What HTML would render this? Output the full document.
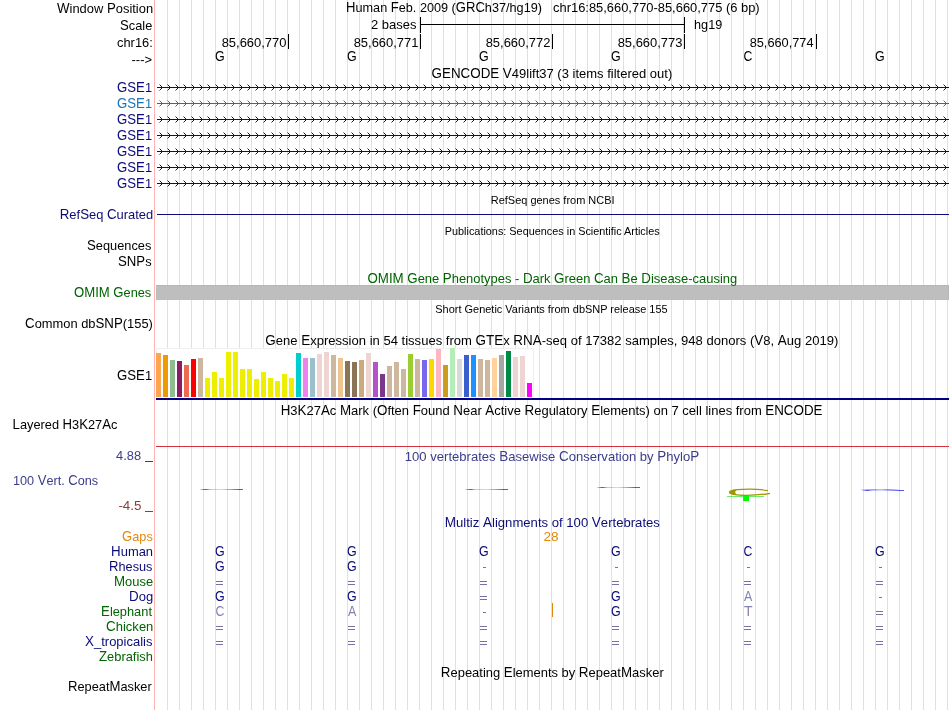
<!DOCTYPE html>
<html><head><meta charset="utf-8"><style>
html,body{margin:0;padding:0;background:#fff;width:950px;height:710px;overflow:hidden}
svg{display:block;font-family:"Liberation Sans",sans-serif;will-change:transform}
</style></head><body>
<svg width="950" height="710" viewBox="0 0 950 710">
<g shape-rendering="crispEdges">
<rect x="0" y="0" width="950" height="710" fill="#fff"/>
<path d="M167.5 0V710M179.5 0V710M191.5 0V710M203.5 0V710M215.5 0V710M227.5 0V710M239.5 0V710M251.5 0V710M263.5 0V710M275.5 0V710M287.5 0V710M299.5 0V710M311.5 0V710M323.5 0V710M335.5 0V710M347.5 0V710M359.5 0V710M371.5 0V710M383.5 0V710M395.5 0V710M407.5 0V710M419.5 0V710M431.5 0V710M443.5 0V710M455.5 0V710M467.5 0V710M479.5 0V710M491.5 0V710M503.5 0V710M515.5 0V710M527.5 0V710M539.5 0V710M551.5 0V710M563.5 0V710M575.5 0V710M587.5 0V710M599.5 0V710M611.5 0V710M623.5 0V710M635.5 0V710M647.5 0V710M659.5 0V710M671.5 0V710M683.5 0V710M695.5 0V710M707.5 0V710M719.5 0V710M731.5 0V710M743.5 0V710M755.5 0V710M767.5 0V710M779.5 0V710M791.5 0V710M803.5 0V710M815.5 0V710M827.5 0V710M839.5 0V710M851.5 0V710M863.5 0V710M875.5 0V710M887.5 0V710M899.5 0V710M911.5 0V710M923.5 0V710M935.5 0V710M947.5 0V710" stroke="#dcdcff" stroke-width="1" fill="none"/>
<path d="M154.5 0V710" stroke="#ffb4b4" stroke-width="1"/>
<path d="M420 17h1v16h-1zM420 24h265v1h-265zM684 17h1v16h-1z" fill="#000"/>
<path d="M288 34h1v15h-1z" fill="#000"/><path d="M420 34h1v15h-1z" fill="#000"/><path d="M552 34h1v15h-1z" fill="#000"/><path d="M684 34h1v15h-1z" fill="#000"/><path d="M816 34h1v15h-1z" fill="#000"/>
<path d="M157 87h792v1h-792zM161 86h1v3h-1zM160 85h1v1h-1zM160 89h1v1h-1zM169 86h1v3h-1zM168 85h1v1h-1zM168 89h1v1h-1zM177 86h1v3h-1zM176 85h1v1h-1zM176 89h1v1h-1zM185 86h1v3h-1zM184 85h1v1h-1zM184 89h1v1h-1zM193 86h1v3h-1zM192 85h1v1h-1zM192 89h1v1h-1zM201 86h1v3h-1zM200 85h1v1h-1zM200 89h1v1h-1zM209 86h1v3h-1zM208 85h1v1h-1zM208 89h1v1h-1zM217 86h1v3h-1zM216 85h1v1h-1zM216 89h1v1h-1zM225 86h1v3h-1zM224 85h1v1h-1zM224 89h1v1h-1zM233 86h1v3h-1zM232 85h1v1h-1zM232 89h1v1h-1zM241 86h1v3h-1zM240 85h1v1h-1zM240 89h1v1h-1zM249 86h1v3h-1zM248 85h1v1h-1zM248 89h1v1h-1zM257 86h1v3h-1zM256 85h1v1h-1zM256 89h1v1h-1zM265 86h1v3h-1zM264 85h1v1h-1zM264 89h1v1h-1zM273 86h1v3h-1zM272 85h1v1h-1zM272 89h1v1h-1zM281 86h1v3h-1zM280 85h1v1h-1zM280 89h1v1h-1zM289 86h1v3h-1zM288 85h1v1h-1zM288 89h1v1h-1zM297 86h1v3h-1zM296 85h1v1h-1zM296 89h1v1h-1zM305 86h1v3h-1zM304 85h1v1h-1zM304 89h1v1h-1zM313 86h1v3h-1zM312 85h1v1h-1zM312 89h1v1h-1zM321 86h1v3h-1zM320 85h1v1h-1zM320 89h1v1h-1zM329 86h1v3h-1zM328 85h1v1h-1zM328 89h1v1h-1zM337 86h1v3h-1zM336 85h1v1h-1zM336 89h1v1h-1zM345 86h1v3h-1zM344 85h1v1h-1zM344 89h1v1h-1zM353 86h1v3h-1zM352 85h1v1h-1zM352 89h1v1h-1zM361 86h1v3h-1zM360 85h1v1h-1zM360 89h1v1h-1zM369 86h1v3h-1zM368 85h1v1h-1zM368 89h1v1h-1zM377 86h1v3h-1zM376 85h1v1h-1zM376 89h1v1h-1zM385 86h1v3h-1zM384 85h1v1h-1zM384 89h1v1h-1zM393 86h1v3h-1zM392 85h1v1h-1zM392 89h1v1h-1zM401 86h1v3h-1zM400 85h1v1h-1zM400 89h1v1h-1zM409 86h1v3h-1zM408 85h1v1h-1zM408 89h1v1h-1zM417 86h1v3h-1zM416 85h1v1h-1zM416 89h1v1h-1zM425 86h1v3h-1zM424 85h1v1h-1zM424 89h1v1h-1zM433 86h1v3h-1zM432 85h1v1h-1zM432 89h1v1h-1zM441 86h1v3h-1zM440 85h1v1h-1zM440 89h1v1h-1zM449 86h1v3h-1zM448 85h1v1h-1zM448 89h1v1h-1zM457 86h1v3h-1zM456 85h1v1h-1zM456 89h1v1h-1zM465 86h1v3h-1zM464 85h1v1h-1zM464 89h1v1h-1zM473 86h1v3h-1zM472 85h1v1h-1zM472 89h1v1h-1zM481 86h1v3h-1zM480 85h1v1h-1zM480 89h1v1h-1zM489 86h1v3h-1zM488 85h1v1h-1zM488 89h1v1h-1zM497 86h1v3h-1zM496 85h1v1h-1zM496 89h1v1h-1zM505 86h1v3h-1zM504 85h1v1h-1zM504 89h1v1h-1zM513 86h1v3h-1zM512 85h1v1h-1zM512 89h1v1h-1zM521 86h1v3h-1zM520 85h1v1h-1zM520 89h1v1h-1zM529 86h1v3h-1zM528 85h1v1h-1zM528 89h1v1h-1zM537 86h1v3h-1zM536 85h1v1h-1zM536 89h1v1h-1zM545 86h1v3h-1zM544 85h1v1h-1zM544 89h1v1h-1zM553 86h1v3h-1zM552 85h1v1h-1zM552 89h1v1h-1zM561 86h1v3h-1zM560 85h1v1h-1zM560 89h1v1h-1zM569 86h1v3h-1zM568 85h1v1h-1zM568 89h1v1h-1zM577 86h1v3h-1zM576 85h1v1h-1zM576 89h1v1h-1zM585 86h1v3h-1zM584 85h1v1h-1zM584 89h1v1h-1zM593 86h1v3h-1zM592 85h1v1h-1zM592 89h1v1h-1zM601 86h1v3h-1zM600 85h1v1h-1zM600 89h1v1h-1zM609 86h1v3h-1zM608 85h1v1h-1zM608 89h1v1h-1zM617 86h1v3h-1zM616 85h1v1h-1zM616 89h1v1h-1zM625 86h1v3h-1zM624 85h1v1h-1zM624 89h1v1h-1zM633 86h1v3h-1zM632 85h1v1h-1zM632 89h1v1h-1zM641 86h1v3h-1zM640 85h1v1h-1zM640 89h1v1h-1zM649 86h1v3h-1zM648 85h1v1h-1zM648 89h1v1h-1zM657 86h1v3h-1zM656 85h1v1h-1zM656 89h1v1h-1zM665 86h1v3h-1zM664 85h1v1h-1zM664 89h1v1h-1zM673 86h1v3h-1zM672 85h1v1h-1zM672 89h1v1h-1zM681 86h1v3h-1zM680 85h1v1h-1zM680 89h1v1h-1zM689 86h1v3h-1zM688 85h1v1h-1zM688 89h1v1h-1zM697 86h1v3h-1zM696 85h1v1h-1zM696 89h1v1h-1zM705 86h1v3h-1zM704 85h1v1h-1zM704 89h1v1h-1zM713 86h1v3h-1zM712 85h1v1h-1zM712 89h1v1h-1zM721 86h1v3h-1zM720 85h1v1h-1zM720 89h1v1h-1zM729 86h1v3h-1zM728 85h1v1h-1zM728 89h1v1h-1zM737 86h1v3h-1zM736 85h1v1h-1zM736 89h1v1h-1zM745 86h1v3h-1zM744 85h1v1h-1zM744 89h1v1h-1zM753 86h1v3h-1zM752 85h1v1h-1zM752 89h1v1h-1zM761 86h1v3h-1zM760 85h1v1h-1zM760 89h1v1h-1zM769 86h1v3h-1zM768 85h1v1h-1zM768 89h1v1h-1zM777 86h1v3h-1zM776 85h1v1h-1zM776 89h1v1h-1zM785 86h1v3h-1zM784 85h1v1h-1zM784 89h1v1h-1zM793 86h1v3h-1zM792 85h1v1h-1zM792 89h1v1h-1zM801 86h1v3h-1zM800 85h1v1h-1zM800 89h1v1h-1zM809 86h1v3h-1zM808 85h1v1h-1zM808 89h1v1h-1zM817 86h1v3h-1zM816 85h1v1h-1zM816 89h1v1h-1zM825 86h1v3h-1zM824 85h1v1h-1zM824 89h1v1h-1zM833 86h1v3h-1zM832 85h1v1h-1zM832 89h1v1h-1zM841 86h1v3h-1zM840 85h1v1h-1zM840 89h1v1h-1zM849 86h1v3h-1zM848 85h1v1h-1zM848 89h1v1h-1zM857 86h1v3h-1zM856 85h1v1h-1zM856 89h1v1h-1zM865 86h1v3h-1zM864 85h1v1h-1zM864 89h1v1h-1zM873 86h1v3h-1zM872 85h1v1h-1zM872 89h1v1h-1zM881 86h1v3h-1zM880 85h1v1h-1zM880 89h1v1h-1zM889 86h1v3h-1zM888 85h1v1h-1zM888 89h1v1h-1zM897 86h1v3h-1zM896 85h1v1h-1zM896 89h1v1h-1zM905 86h1v3h-1zM904 85h1v1h-1zM904 89h1v1h-1zM913 86h1v3h-1zM912 85h1v1h-1zM912 89h1v1h-1zM921 86h1v3h-1zM920 85h1v1h-1zM920 89h1v1h-1zM929 86h1v3h-1zM928 85h1v1h-1zM928 89h1v1h-1zM937 86h1v3h-1zM936 85h1v1h-1zM936 89h1v1h-1zM945 86h1v3h-1zM944 85h1v1h-1zM944 89h1v1h-1z" fill="#0c0c78"/>
<path d="M159 84h1v1h-1zM159 90h1v1h-1zM167 84h1v1h-1zM167 90h1v1h-1zM175 84h1v1h-1zM175 90h1v1h-1zM183 84h1v1h-1zM183 90h1v1h-1zM191 84h1v1h-1zM191 90h1v1h-1zM199 84h1v1h-1zM199 90h1v1h-1zM207 84h1v1h-1zM207 90h1v1h-1zM215 84h1v1h-1zM215 90h1v1h-1zM223 84h1v1h-1zM223 90h1v1h-1zM231 84h1v1h-1zM231 90h1v1h-1zM239 84h1v1h-1zM239 90h1v1h-1zM247 84h1v1h-1zM247 90h1v1h-1zM255 84h1v1h-1zM255 90h1v1h-1zM263 84h1v1h-1zM263 90h1v1h-1zM271 84h1v1h-1zM271 90h1v1h-1zM279 84h1v1h-1zM279 90h1v1h-1zM287 84h1v1h-1zM287 90h1v1h-1zM295 84h1v1h-1zM295 90h1v1h-1zM303 84h1v1h-1zM303 90h1v1h-1zM311 84h1v1h-1zM311 90h1v1h-1zM319 84h1v1h-1zM319 90h1v1h-1zM327 84h1v1h-1zM327 90h1v1h-1zM335 84h1v1h-1zM335 90h1v1h-1zM343 84h1v1h-1zM343 90h1v1h-1zM351 84h1v1h-1zM351 90h1v1h-1zM359 84h1v1h-1zM359 90h1v1h-1zM367 84h1v1h-1zM367 90h1v1h-1zM375 84h1v1h-1zM375 90h1v1h-1zM383 84h1v1h-1zM383 90h1v1h-1zM391 84h1v1h-1zM391 90h1v1h-1zM399 84h1v1h-1zM399 90h1v1h-1zM407 84h1v1h-1zM407 90h1v1h-1zM415 84h1v1h-1zM415 90h1v1h-1zM423 84h1v1h-1zM423 90h1v1h-1zM431 84h1v1h-1zM431 90h1v1h-1zM439 84h1v1h-1zM439 90h1v1h-1zM447 84h1v1h-1zM447 90h1v1h-1zM455 84h1v1h-1zM455 90h1v1h-1zM463 84h1v1h-1zM463 90h1v1h-1zM471 84h1v1h-1zM471 90h1v1h-1zM479 84h1v1h-1zM479 90h1v1h-1zM487 84h1v1h-1zM487 90h1v1h-1zM495 84h1v1h-1zM495 90h1v1h-1zM503 84h1v1h-1zM503 90h1v1h-1zM511 84h1v1h-1zM511 90h1v1h-1zM519 84h1v1h-1zM519 90h1v1h-1zM527 84h1v1h-1zM527 90h1v1h-1zM535 84h1v1h-1zM535 90h1v1h-1zM543 84h1v1h-1zM543 90h1v1h-1zM551 84h1v1h-1zM551 90h1v1h-1zM559 84h1v1h-1zM559 90h1v1h-1zM567 84h1v1h-1zM567 90h1v1h-1zM575 84h1v1h-1zM575 90h1v1h-1zM583 84h1v1h-1zM583 90h1v1h-1zM591 84h1v1h-1zM591 90h1v1h-1zM599 84h1v1h-1zM599 90h1v1h-1zM607 84h1v1h-1zM607 90h1v1h-1zM615 84h1v1h-1zM615 90h1v1h-1zM623 84h1v1h-1zM623 90h1v1h-1zM631 84h1v1h-1zM631 90h1v1h-1zM639 84h1v1h-1zM639 90h1v1h-1zM647 84h1v1h-1zM647 90h1v1h-1zM655 84h1v1h-1zM655 90h1v1h-1zM663 84h1v1h-1zM663 90h1v1h-1zM671 84h1v1h-1zM671 90h1v1h-1zM679 84h1v1h-1zM679 90h1v1h-1zM687 84h1v1h-1zM687 90h1v1h-1zM695 84h1v1h-1zM695 90h1v1h-1zM703 84h1v1h-1zM703 90h1v1h-1zM711 84h1v1h-1zM711 90h1v1h-1zM719 84h1v1h-1zM719 90h1v1h-1zM727 84h1v1h-1zM727 90h1v1h-1zM735 84h1v1h-1zM735 90h1v1h-1zM743 84h1v1h-1zM743 90h1v1h-1zM751 84h1v1h-1zM751 90h1v1h-1zM759 84h1v1h-1zM759 90h1v1h-1zM767 84h1v1h-1zM767 90h1v1h-1zM775 84h1v1h-1zM775 90h1v1h-1zM783 84h1v1h-1zM783 90h1v1h-1zM791 84h1v1h-1zM791 90h1v1h-1zM799 84h1v1h-1zM799 90h1v1h-1zM807 84h1v1h-1zM807 90h1v1h-1zM815 84h1v1h-1zM815 90h1v1h-1zM823 84h1v1h-1zM823 90h1v1h-1zM831 84h1v1h-1zM831 90h1v1h-1zM839 84h1v1h-1zM839 90h1v1h-1zM847 84h1v1h-1zM847 90h1v1h-1zM855 84h1v1h-1zM855 90h1v1h-1zM863 84h1v1h-1zM863 90h1v1h-1zM871 84h1v1h-1zM871 90h1v1h-1zM879 84h1v1h-1zM879 90h1v1h-1zM887 84h1v1h-1zM887 90h1v1h-1zM895 84h1v1h-1zM895 90h1v1h-1zM903 84h1v1h-1zM903 90h1v1h-1zM911 84h1v1h-1zM911 90h1v1h-1zM919 84h1v1h-1zM919 90h1v1h-1zM927 84h1v1h-1zM927 90h1v1h-1zM935 84h1v1h-1zM935 90h1v1h-1zM943 84h1v1h-1zM943 90h1v1h-1z" fill="#0c0c78" fill-opacity="0.45"/>
<path d="M157 103h792v1h-792zM161 102h1v3h-1zM160 101h1v1h-1zM160 105h1v1h-1zM169 102h1v3h-1zM168 101h1v1h-1zM168 105h1v1h-1zM177 102h1v3h-1zM176 101h1v1h-1zM176 105h1v1h-1zM185 102h1v3h-1zM184 101h1v1h-1zM184 105h1v1h-1zM193 102h1v3h-1zM192 101h1v1h-1zM192 105h1v1h-1zM201 102h1v3h-1zM200 101h1v1h-1zM200 105h1v1h-1zM209 102h1v3h-1zM208 101h1v1h-1zM208 105h1v1h-1zM217 102h1v3h-1zM216 101h1v1h-1zM216 105h1v1h-1zM225 102h1v3h-1zM224 101h1v1h-1zM224 105h1v1h-1zM233 102h1v3h-1zM232 101h1v1h-1zM232 105h1v1h-1zM241 102h1v3h-1zM240 101h1v1h-1zM240 105h1v1h-1zM249 102h1v3h-1zM248 101h1v1h-1zM248 105h1v1h-1zM257 102h1v3h-1zM256 101h1v1h-1zM256 105h1v1h-1zM265 102h1v3h-1zM264 101h1v1h-1zM264 105h1v1h-1zM273 102h1v3h-1zM272 101h1v1h-1zM272 105h1v1h-1zM281 102h1v3h-1zM280 101h1v1h-1zM280 105h1v1h-1zM289 102h1v3h-1zM288 101h1v1h-1zM288 105h1v1h-1zM297 102h1v3h-1zM296 101h1v1h-1zM296 105h1v1h-1zM305 102h1v3h-1zM304 101h1v1h-1zM304 105h1v1h-1zM313 102h1v3h-1zM312 101h1v1h-1zM312 105h1v1h-1zM321 102h1v3h-1zM320 101h1v1h-1zM320 105h1v1h-1zM329 102h1v3h-1zM328 101h1v1h-1zM328 105h1v1h-1zM337 102h1v3h-1zM336 101h1v1h-1zM336 105h1v1h-1zM345 102h1v3h-1zM344 101h1v1h-1zM344 105h1v1h-1zM353 102h1v3h-1zM352 101h1v1h-1zM352 105h1v1h-1zM361 102h1v3h-1zM360 101h1v1h-1zM360 105h1v1h-1zM369 102h1v3h-1zM368 101h1v1h-1zM368 105h1v1h-1zM377 102h1v3h-1zM376 101h1v1h-1zM376 105h1v1h-1zM385 102h1v3h-1zM384 101h1v1h-1zM384 105h1v1h-1zM393 102h1v3h-1zM392 101h1v1h-1zM392 105h1v1h-1zM401 102h1v3h-1zM400 101h1v1h-1zM400 105h1v1h-1zM409 102h1v3h-1zM408 101h1v1h-1zM408 105h1v1h-1zM417 102h1v3h-1zM416 101h1v1h-1zM416 105h1v1h-1zM425 102h1v3h-1zM424 101h1v1h-1zM424 105h1v1h-1zM433 102h1v3h-1zM432 101h1v1h-1zM432 105h1v1h-1zM441 102h1v3h-1zM440 101h1v1h-1zM440 105h1v1h-1zM449 102h1v3h-1zM448 101h1v1h-1zM448 105h1v1h-1zM457 102h1v3h-1zM456 101h1v1h-1zM456 105h1v1h-1zM465 102h1v3h-1zM464 101h1v1h-1zM464 105h1v1h-1zM473 102h1v3h-1zM472 101h1v1h-1zM472 105h1v1h-1zM481 102h1v3h-1zM480 101h1v1h-1zM480 105h1v1h-1zM489 102h1v3h-1zM488 101h1v1h-1zM488 105h1v1h-1zM497 102h1v3h-1zM496 101h1v1h-1zM496 105h1v1h-1zM505 102h1v3h-1zM504 101h1v1h-1zM504 105h1v1h-1zM513 102h1v3h-1zM512 101h1v1h-1zM512 105h1v1h-1zM521 102h1v3h-1zM520 101h1v1h-1zM520 105h1v1h-1zM529 102h1v3h-1zM528 101h1v1h-1zM528 105h1v1h-1zM537 102h1v3h-1zM536 101h1v1h-1zM536 105h1v1h-1zM545 102h1v3h-1zM544 101h1v1h-1zM544 105h1v1h-1zM553 102h1v3h-1zM552 101h1v1h-1zM552 105h1v1h-1zM561 102h1v3h-1zM560 101h1v1h-1zM560 105h1v1h-1zM569 102h1v3h-1zM568 101h1v1h-1zM568 105h1v1h-1zM577 102h1v3h-1zM576 101h1v1h-1zM576 105h1v1h-1zM585 102h1v3h-1zM584 101h1v1h-1zM584 105h1v1h-1zM593 102h1v3h-1zM592 101h1v1h-1zM592 105h1v1h-1zM601 102h1v3h-1zM600 101h1v1h-1zM600 105h1v1h-1zM609 102h1v3h-1zM608 101h1v1h-1zM608 105h1v1h-1zM617 102h1v3h-1zM616 101h1v1h-1zM616 105h1v1h-1zM625 102h1v3h-1zM624 101h1v1h-1zM624 105h1v1h-1zM633 102h1v3h-1zM632 101h1v1h-1zM632 105h1v1h-1zM641 102h1v3h-1zM640 101h1v1h-1zM640 105h1v1h-1zM649 102h1v3h-1zM648 101h1v1h-1zM648 105h1v1h-1zM657 102h1v3h-1zM656 101h1v1h-1zM656 105h1v1h-1zM665 102h1v3h-1zM664 101h1v1h-1zM664 105h1v1h-1zM673 102h1v3h-1zM672 101h1v1h-1zM672 105h1v1h-1zM681 102h1v3h-1zM680 101h1v1h-1zM680 105h1v1h-1zM689 102h1v3h-1zM688 101h1v1h-1zM688 105h1v1h-1zM697 102h1v3h-1zM696 101h1v1h-1zM696 105h1v1h-1zM705 102h1v3h-1zM704 101h1v1h-1zM704 105h1v1h-1zM713 102h1v3h-1zM712 101h1v1h-1zM712 105h1v1h-1zM721 102h1v3h-1zM720 101h1v1h-1zM720 105h1v1h-1zM729 102h1v3h-1zM728 101h1v1h-1zM728 105h1v1h-1zM737 102h1v3h-1zM736 101h1v1h-1zM736 105h1v1h-1zM745 102h1v3h-1zM744 101h1v1h-1zM744 105h1v1h-1zM753 102h1v3h-1zM752 101h1v1h-1zM752 105h1v1h-1zM761 102h1v3h-1zM760 101h1v1h-1zM760 105h1v1h-1zM769 102h1v3h-1zM768 101h1v1h-1zM768 105h1v1h-1zM777 102h1v3h-1zM776 101h1v1h-1zM776 105h1v1h-1zM785 102h1v3h-1zM784 101h1v1h-1zM784 105h1v1h-1zM793 102h1v3h-1zM792 101h1v1h-1zM792 105h1v1h-1zM801 102h1v3h-1zM800 101h1v1h-1zM800 105h1v1h-1zM809 102h1v3h-1zM808 101h1v1h-1zM808 105h1v1h-1zM817 102h1v3h-1zM816 101h1v1h-1zM816 105h1v1h-1zM825 102h1v3h-1zM824 101h1v1h-1zM824 105h1v1h-1zM833 102h1v3h-1zM832 101h1v1h-1zM832 105h1v1h-1zM841 102h1v3h-1zM840 101h1v1h-1zM840 105h1v1h-1zM849 102h1v3h-1zM848 101h1v1h-1zM848 105h1v1h-1zM857 102h1v3h-1zM856 101h1v1h-1zM856 105h1v1h-1zM865 102h1v3h-1zM864 101h1v1h-1zM864 105h1v1h-1zM873 102h1v3h-1zM872 101h1v1h-1zM872 105h1v1h-1zM881 102h1v3h-1zM880 101h1v1h-1zM880 105h1v1h-1zM889 102h1v3h-1zM888 101h1v1h-1zM888 105h1v1h-1zM897 102h1v3h-1zM896 101h1v1h-1zM896 105h1v1h-1zM905 102h1v3h-1zM904 101h1v1h-1zM904 105h1v1h-1zM913 102h1v3h-1zM912 101h1v1h-1zM912 105h1v1h-1zM921 102h1v3h-1zM920 101h1v1h-1zM920 105h1v1h-1zM929 102h1v3h-1zM928 101h1v1h-1zM928 105h1v1h-1zM937 102h1v3h-1zM936 101h1v1h-1zM936 105h1v1h-1zM945 102h1v3h-1zM944 101h1v1h-1zM944 105h1v1h-1z" fill="#1a73b8"/>
<path d="M159 100h1v1h-1zM159 106h1v1h-1zM167 100h1v1h-1zM167 106h1v1h-1zM175 100h1v1h-1zM175 106h1v1h-1zM183 100h1v1h-1zM183 106h1v1h-1zM191 100h1v1h-1zM191 106h1v1h-1zM199 100h1v1h-1zM199 106h1v1h-1zM207 100h1v1h-1zM207 106h1v1h-1zM215 100h1v1h-1zM215 106h1v1h-1zM223 100h1v1h-1zM223 106h1v1h-1zM231 100h1v1h-1zM231 106h1v1h-1zM239 100h1v1h-1zM239 106h1v1h-1zM247 100h1v1h-1zM247 106h1v1h-1zM255 100h1v1h-1zM255 106h1v1h-1zM263 100h1v1h-1zM263 106h1v1h-1zM271 100h1v1h-1zM271 106h1v1h-1zM279 100h1v1h-1zM279 106h1v1h-1zM287 100h1v1h-1zM287 106h1v1h-1zM295 100h1v1h-1zM295 106h1v1h-1zM303 100h1v1h-1zM303 106h1v1h-1zM311 100h1v1h-1zM311 106h1v1h-1zM319 100h1v1h-1zM319 106h1v1h-1zM327 100h1v1h-1zM327 106h1v1h-1zM335 100h1v1h-1zM335 106h1v1h-1zM343 100h1v1h-1zM343 106h1v1h-1zM351 100h1v1h-1zM351 106h1v1h-1zM359 100h1v1h-1zM359 106h1v1h-1zM367 100h1v1h-1zM367 106h1v1h-1zM375 100h1v1h-1zM375 106h1v1h-1zM383 100h1v1h-1zM383 106h1v1h-1zM391 100h1v1h-1zM391 106h1v1h-1zM399 100h1v1h-1zM399 106h1v1h-1zM407 100h1v1h-1zM407 106h1v1h-1zM415 100h1v1h-1zM415 106h1v1h-1zM423 100h1v1h-1zM423 106h1v1h-1zM431 100h1v1h-1zM431 106h1v1h-1zM439 100h1v1h-1zM439 106h1v1h-1zM447 100h1v1h-1zM447 106h1v1h-1zM455 100h1v1h-1zM455 106h1v1h-1zM463 100h1v1h-1zM463 106h1v1h-1zM471 100h1v1h-1zM471 106h1v1h-1zM479 100h1v1h-1zM479 106h1v1h-1zM487 100h1v1h-1zM487 106h1v1h-1zM495 100h1v1h-1zM495 106h1v1h-1zM503 100h1v1h-1zM503 106h1v1h-1zM511 100h1v1h-1zM511 106h1v1h-1zM519 100h1v1h-1zM519 106h1v1h-1zM527 100h1v1h-1zM527 106h1v1h-1zM535 100h1v1h-1zM535 106h1v1h-1zM543 100h1v1h-1zM543 106h1v1h-1zM551 100h1v1h-1zM551 106h1v1h-1zM559 100h1v1h-1zM559 106h1v1h-1zM567 100h1v1h-1zM567 106h1v1h-1zM575 100h1v1h-1zM575 106h1v1h-1zM583 100h1v1h-1zM583 106h1v1h-1zM591 100h1v1h-1zM591 106h1v1h-1zM599 100h1v1h-1zM599 106h1v1h-1zM607 100h1v1h-1zM607 106h1v1h-1zM615 100h1v1h-1zM615 106h1v1h-1zM623 100h1v1h-1zM623 106h1v1h-1zM631 100h1v1h-1zM631 106h1v1h-1zM639 100h1v1h-1zM639 106h1v1h-1zM647 100h1v1h-1zM647 106h1v1h-1zM655 100h1v1h-1zM655 106h1v1h-1zM663 100h1v1h-1zM663 106h1v1h-1zM671 100h1v1h-1zM671 106h1v1h-1zM679 100h1v1h-1zM679 106h1v1h-1zM687 100h1v1h-1zM687 106h1v1h-1zM695 100h1v1h-1zM695 106h1v1h-1zM703 100h1v1h-1zM703 106h1v1h-1zM711 100h1v1h-1zM711 106h1v1h-1zM719 100h1v1h-1zM719 106h1v1h-1zM727 100h1v1h-1zM727 106h1v1h-1zM735 100h1v1h-1zM735 106h1v1h-1zM743 100h1v1h-1zM743 106h1v1h-1zM751 100h1v1h-1zM751 106h1v1h-1zM759 100h1v1h-1zM759 106h1v1h-1zM767 100h1v1h-1zM767 106h1v1h-1zM775 100h1v1h-1zM775 106h1v1h-1zM783 100h1v1h-1zM783 106h1v1h-1zM791 100h1v1h-1zM791 106h1v1h-1zM799 100h1v1h-1zM799 106h1v1h-1zM807 100h1v1h-1zM807 106h1v1h-1zM815 100h1v1h-1zM815 106h1v1h-1zM823 100h1v1h-1zM823 106h1v1h-1zM831 100h1v1h-1zM831 106h1v1h-1zM839 100h1v1h-1zM839 106h1v1h-1zM847 100h1v1h-1zM847 106h1v1h-1zM855 100h1v1h-1zM855 106h1v1h-1zM863 100h1v1h-1zM863 106h1v1h-1zM871 100h1v1h-1zM871 106h1v1h-1zM879 100h1v1h-1zM879 106h1v1h-1zM887 100h1v1h-1zM887 106h1v1h-1zM895 100h1v1h-1zM895 106h1v1h-1zM903 100h1v1h-1zM903 106h1v1h-1zM911 100h1v1h-1zM911 106h1v1h-1zM919 100h1v1h-1zM919 106h1v1h-1zM927 100h1v1h-1zM927 106h1v1h-1zM935 100h1v1h-1zM935 106h1v1h-1zM943 100h1v1h-1zM943 106h1v1h-1z" fill="#1a73b8" fill-opacity="0.45"/>
<path d="M157 119h792v1h-792zM161 118h1v3h-1zM160 117h1v1h-1zM160 121h1v1h-1zM169 118h1v3h-1zM168 117h1v1h-1zM168 121h1v1h-1zM177 118h1v3h-1zM176 117h1v1h-1zM176 121h1v1h-1zM185 118h1v3h-1zM184 117h1v1h-1zM184 121h1v1h-1zM193 118h1v3h-1zM192 117h1v1h-1zM192 121h1v1h-1zM201 118h1v3h-1zM200 117h1v1h-1zM200 121h1v1h-1zM209 118h1v3h-1zM208 117h1v1h-1zM208 121h1v1h-1zM217 118h1v3h-1zM216 117h1v1h-1zM216 121h1v1h-1zM225 118h1v3h-1zM224 117h1v1h-1zM224 121h1v1h-1zM233 118h1v3h-1zM232 117h1v1h-1zM232 121h1v1h-1zM241 118h1v3h-1zM240 117h1v1h-1zM240 121h1v1h-1zM249 118h1v3h-1zM248 117h1v1h-1zM248 121h1v1h-1zM257 118h1v3h-1zM256 117h1v1h-1zM256 121h1v1h-1zM265 118h1v3h-1zM264 117h1v1h-1zM264 121h1v1h-1zM273 118h1v3h-1zM272 117h1v1h-1zM272 121h1v1h-1zM281 118h1v3h-1zM280 117h1v1h-1zM280 121h1v1h-1zM289 118h1v3h-1zM288 117h1v1h-1zM288 121h1v1h-1zM297 118h1v3h-1zM296 117h1v1h-1zM296 121h1v1h-1zM305 118h1v3h-1zM304 117h1v1h-1zM304 121h1v1h-1zM313 118h1v3h-1zM312 117h1v1h-1zM312 121h1v1h-1zM321 118h1v3h-1zM320 117h1v1h-1zM320 121h1v1h-1zM329 118h1v3h-1zM328 117h1v1h-1zM328 121h1v1h-1zM337 118h1v3h-1zM336 117h1v1h-1zM336 121h1v1h-1zM345 118h1v3h-1zM344 117h1v1h-1zM344 121h1v1h-1zM353 118h1v3h-1zM352 117h1v1h-1zM352 121h1v1h-1zM361 118h1v3h-1zM360 117h1v1h-1zM360 121h1v1h-1zM369 118h1v3h-1zM368 117h1v1h-1zM368 121h1v1h-1zM377 118h1v3h-1zM376 117h1v1h-1zM376 121h1v1h-1zM385 118h1v3h-1zM384 117h1v1h-1zM384 121h1v1h-1zM393 118h1v3h-1zM392 117h1v1h-1zM392 121h1v1h-1zM401 118h1v3h-1zM400 117h1v1h-1zM400 121h1v1h-1zM409 118h1v3h-1zM408 117h1v1h-1zM408 121h1v1h-1zM417 118h1v3h-1zM416 117h1v1h-1zM416 121h1v1h-1zM425 118h1v3h-1zM424 117h1v1h-1zM424 121h1v1h-1zM433 118h1v3h-1zM432 117h1v1h-1zM432 121h1v1h-1zM441 118h1v3h-1zM440 117h1v1h-1zM440 121h1v1h-1zM449 118h1v3h-1zM448 117h1v1h-1zM448 121h1v1h-1zM457 118h1v3h-1zM456 117h1v1h-1zM456 121h1v1h-1zM465 118h1v3h-1zM464 117h1v1h-1zM464 121h1v1h-1zM473 118h1v3h-1zM472 117h1v1h-1zM472 121h1v1h-1zM481 118h1v3h-1zM480 117h1v1h-1zM480 121h1v1h-1zM489 118h1v3h-1zM488 117h1v1h-1zM488 121h1v1h-1zM497 118h1v3h-1zM496 117h1v1h-1zM496 121h1v1h-1zM505 118h1v3h-1zM504 117h1v1h-1zM504 121h1v1h-1zM513 118h1v3h-1zM512 117h1v1h-1zM512 121h1v1h-1zM521 118h1v3h-1zM520 117h1v1h-1zM520 121h1v1h-1zM529 118h1v3h-1zM528 117h1v1h-1zM528 121h1v1h-1zM537 118h1v3h-1zM536 117h1v1h-1zM536 121h1v1h-1zM545 118h1v3h-1zM544 117h1v1h-1zM544 121h1v1h-1zM553 118h1v3h-1zM552 117h1v1h-1zM552 121h1v1h-1zM561 118h1v3h-1zM560 117h1v1h-1zM560 121h1v1h-1zM569 118h1v3h-1zM568 117h1v1h-1zM568 121h1v1h-1zM577 118h1v3h-1zM576 117h1v1h-1zM576 121h1v1h-1zM585 118h1v3h-1zM584 117h1v1h-1zM584 121h1v1h-1zM593 118h1v3h-1zM592 117h1v1h-1zM592 121h1v1h-1zM601 118h1v3h-1zM600 117h1v1h-1zM600 121h1v1h-1zM609 118h1v3h-1zM608 117h1v1h-1zM608 121h1v1h-1zM617 118h1v3h-1zM616 117h1v1h-1zM616 121h1v1h-1zM625 118h1v3h-1zM624 117h1v1h-1zM624 121h1v1h-1zM633 118h1v3h-1zM632 117h1v1h-1zM632 121h1v1h-1zM641 118h1v3h-1zM640 117h1v1h-1zM640 121h1v1h-1zM649 118h1v3h-1zM648 117h1v1h-1zM648 121h1v1h-1zM657 118h1v3h-1zM656 117h1v1h-1zM656 121h1v1h-1zM665 118h1v3h-1zM664 117h1v1h-1zM664 121h1v1h-1zM673 118h1v3h-1zM672 117h1v1h-1zM672 121h1v1h-1zM681 118h1v3h-1zM680 117h1v1h-1zM680 121h1v1h-1zM689 118h1v3h-1zM688 117h1v1h-1zM688 121h1v1h-1zM697 118h1v3h-1zM696 117h1v1h-1zM696 121h1v1h-1zM705 118h1v3h-1zM704 117h1v1h-1zM704 121h1v1h-1zM713 118h1v3h-1zM712 117h1v1h-1zM712 121h1v1h-1zM721 118h1v3h-1zM720 117h1v1h-1zM720 121h1v1h-1zM729 118h1v3h-1zM728 117h1v1h-1zM728 121h1v1h-1zM737 118h1v3h-1zM736 117h1v1h-1zM736 121h1v1h-1zM745 118h1v3h-1zM744 117h1v1h-1zM744 121h1v1h-1zM753 118h1v3h-1zM752 117h1v1h-1zM752 121h1v1h-1zM761 118h1v3h-1zM760 117h1v1h-1zM760 121h1v1h-1zM769 118h1v3h-1zM768 117h1v1h-1zM768 121h1v1h-1zM777 118h1v3h-1zM776 117h1v1h-1zM776 121h1v1h-1zM785 118h1v3h-1zM784 117h1v1h-1zM784 121h1v1h-1zM793 118h1v3h-1zM792 117h1v1h-1zM792 121h1v1h-1zM801 118h1v3h-1zM800 117h1v1h-1zM800 121h1v1h-1zM809 118h1v3h-1zM808 117h1v1h-1zM808 121h1v1h-1zM817 118h1v3h-1zM816 117h1v1h-1zM816 121h1v1h-1zM825 118h1v3h-1zM824 117h1v1h-1zM824 121h1v1h-1zM833 118h1v3h-1zM832 117h1v1h-1zM832 121h1v1h-1zM841 118h1v3h-1zM840 117h1v1h-1zM840 121h1v1h-1zM849 118h1v3h-1zM848 117h1v1h-1zM848 121h1v1h-1zM857 118h1v3h-1zM856 117h1v1h-1zM856 121h1v1h-1zM865 118h1v3h-1zM864 117h1v1h-1zM864 121h1v1h-1zM873 118h1v3h-1zM872 117h1v1h-1zM872 121h1v1h-1zM881 118h1v3h-1zM880 117h1v1h-1zM880 121h1v1h-1zM889 118h1v3h-1zM888 117h1v1h-1zM888 121h1v1h-1zM897 118h1v3h-1zM896 117h1v1h-1zM896 121h1v1h-1zM905 118h1v3h-1zM904 117h1v1h-1zM904 121h1v1h-1zM913 118h1v3h-1zM912 117h1v1h-1zM912 121h1v1h-1zM921 118h1v3h-1zM920 117h1v1h-1zM920 121h1v1h-1zM929 118h1v3h-1zM928 117h1v1h-1zM928 121h1v1h-1zM937 118h1v3h-1zM936 117h1v1h-1zM936 121h1v1h-1zM945 118h1v3h-1zM944 117h1v1h-1zM944 121h1v1h-1z" fill="#0c0c78"/>
<path d="M159 116h1v1h-1zM159 122h1v1h-1zM167 116h1v1h-1zM167 122h1v1h-1zM175 116h1v1h-1zM175 122h1v1h-1zM183 116h1v1h-1zM183 122h1v1h-1zM191 116h1v1h-1zM191 122h1v1h-1zM199 116h1v1h-1zM199 122h1v1h-1zM207 116h1v1h-1zM207 122h1v1h-1zM215 116h1v1h-1zM215 122h1v1h-1zM223 116h1v1h-1zM223 122h1v1h-1zM231 116h1v1h-1zM231 122h1v1h-1zM239 116h1v1h-1zM239 122h1v1h-1zM247 116h1v1h-1zM247 122h1v1h-1zM255 116h1v1h-1zM255 122h1v1h-1zM263 116h1v1h-1zM263 122h1v1h-1zM271 116h1v1h-1zM271 122h1v1h-1zM279 116h1v1h-1zM279 122h1v1h-1zM287 116h1v1h-1zM287 122h1v1h-1zM295 116h1v1h-1zM295 122h1v1h-1zM303 116h1v1h-1zM303 122h1v1h-1zM311 116h1v1h-1zM311 122h1v1h-1zM319 116h1v1h-1zM319 122h1v1h-1zM327 116h1v1h-1zM327 122h1v1h-1zM335 116h1v1h-1zM335 122h1v1h-1zM343 116h1v1h-1zM343 122h1v1h-1zM351 116h1v1h-1zM351 122h1v1h-1zM359 116h1v1h-1zM359 122h1v1h-1zM367 116h1v1h-1zM367 122h1v1h-1zM375 116h1v1h-1zM375 122h1v1h-1zM383 116h1v1h-1zM383 122h1v1h-1zM391 116h1v1h-1zM391 122h1v1h-1zM399 116h1v1h-1zM399 122h1v1h-1zM407 116h1v1h-1zM407 122h1v1h-1zM415 116h1v1h-1zM415 122h1v1h-1zM423 116h1v1h-1zM423 122h1v1h-1zM431 116h1v1h-1zM431 122h1v1h-1zM439 116h1v1h-1zM439 122h1v1h-1zM447 116h1v1h-1zM447 122h1v1h-1zM455 116h1v1h-1zM455 122h1v1h-1zM463 116h1v1h-1zM463 122h1v1h-1zM471 116h1v1h-1zM471 122h1v1h-1zM479 116h1v1h-1zM479 122h1v1h-1zM487 116h1v1h-1zM487 122h1v1h-1zM495 116h1v1h-1zM495 122h1v1h-1zM503 116h1v1h-1zM503 122h1v1h-1zM511 116h1v1h-1zM511 122h1v1h-1zM519 116h1v1h-1zM519 122h1v1h-1zM527 116h1v1h-1zM527 122h1v1h-1zM535 116h1v1h-1zM535 122h1v1h-1zM543 116h1v1h-1zM543 122h1v1h-1zM551 116h1v1h-1zM551 122h1v1h-1zM559 116h1v1h-1zM559 122h1v1h-1zM567 116h1v1h-1zM567 122h1v1h-1zM575 116h1v1h-1zM575 122h1v1h-1zM583 116h1v1h-1zM583 122h1v1h-1zM591 116h1v1h-1zM591 122h1v1h-1zM599 116h1v1h-1zM599 122h1v1h-1zM607 116h1v1h-1zM607 122h1v1h-1zM615 116h1v1h-1zM615 122h1v1h-1zM623 116h1v1h-1zM623 122h1v1h-1zM631 116h1v1h-1zM631 122h1v1h-1zM639 116h1v1h-1zM639 122h1v1h-1zM647 116h1v1h-1zM647 122h1v1h-1zM655 116h1v1h-1zM655 122h1v1h-1zM663 116h1v1h-1zM663 122h1v1h-1zM671 116h1v1h-1zM671 122h1v1h-1zM679 116h1v1h-1zM679 122h1v1h-1zM687 116h1v1h-1zM687 122h1v1h-1zM695 116h1v1h-1zM695 122h1v1h-1zM703 116h1v1h-1zM703 122h1v1h-1zM711 116h1v1h-1zM711 122h1v1h-1zM719 116h1v1h-1zM719 122h1v1h-1zM727 116h1v1h-1zM727 122h1v1h-1zM735 116h1v1h-1zM735 122h1v1h-1zM743 116h1v1h-1zM743 122h1v1h-1zM751 116h1v1h-1zM751 122h1v1h-1zM759 116h1v1h-1zM759 122h1v1h-1zM767 116h1v1h-1zM767 122h1v1h-1zM775 116h1v1h-1zM775 122h1v1h-1zM783 116h1v1h-1zM783 122h1v1h-1zM791 116h1v1h-1zM791 122h1v1h-1zM799 116h1v1h-1zM799 122h1v1h-1zM807 116h1v1h-1zM807 122h1v1h-1zM815 116h1v1h-1zM815 122h1v1h-1zM823 116h1v1h-1zM823 122h1v1h-1zM831 116h1v1h-1zM831 122h1v1h-1zM839 116h1v1h-1zM839 122h1v1h-1zM847 116h1v1h-1zM847 122h1v1h-1zM855 116h1v1h-1zM855 122h1v1h-1zM863 116h1v1h-1zM863 122h1v1h-1zM871 116h1v1h-1zM871 122h1v1h-1zM879 116h1v1h-1zM879 122h1v1h-1zM887 116h1v1h-1zM887 122h1v1h-1zM895 116h1v1h-1zM895 122h1v1h-1zM903 116h1v1h-1zM903 122h1v1h-1zM911 116h1v1h-1zM911 122h1v1h-1zM919 116h1v1h-1zM919 122h1v1h-1zM927 116h1v1h-1zM927 122h1v1h-1zM935 116h1v1h-1zM935 122h1v1h-1zM943 116h1v1h-1zM943 122h1v1h-1z" fill="#0c0c78" fill-opacity="0.45"/>
<path d="M157 135h792v1h-792zM161 134h1v3h-1zM160 133h1v1h-1zM160 137h1v1h-1zM169 134h1v3h-1zM168 133h1v1h-1zM168 137h1v1h-1zM177 134h1v3h-1zM176 133h1v1h-1zM176 137h1v1h-1zM185 134h1v3h-1zM184 133h1v1h-1zM184 137h1v1h-1zM193 134h1v3h-1zM192 133h1v1h-1zM192 137h1v1h-1zM201 134h1v3h-1zM200 133h1v1h-1zM200 137h1v1h-1zM209 134h1v3h-1zM208 133h1v1h-1zM208 137h1v1h-1zM217 134h1v3h-1zM216 133h1v1h-1zM216 137h1v1h-1zM225 134h1v3h-1zM224 133h1v1h-1zM224 137h1v1h-1zM233 134h1v3h-1zM232 133h1v1h-1zM232 137h1v1h-1zM241 134h1v3h-1zM240 133h1v1h-1zM240 137h1v1h-1zM249 134h1v3h-1zM248 133h1v1h-1zM248 137h1v1h-1zM257 134h1v3h-1zM256 133h1v1h-1zM256 137h1v1h-1zM265 134h1v3h-1zM264 133h1v1h-1zM264 137h1v1h-1zM273 134h1v3h-1zM272 133h1v1h-1zM272 137h1v1h-1zM281 134h1v3h-1zM280 133h1v1h-1zM280 137h1v1h-1zM289 134h1v3h-1zM288 133h1v1h-1zM288 137h1v1h-1zM297 134h1v3h-1zM296 133h1v1h-1zM296 137h1v1h-1zM305 134h1v3h-1zM304 133h1v1h-1zM304 137h1v1h-1zM313 134h1v3h-1zM312 133h1v1h-1zM312 137h1v1h-1zM321 134h1v3h-1zM320 133h1v1h-1zM320 137h1v1h-1zM329 134h1v3h-1zM328 133h1v1h-1zM328 137h1v1h-1zM337 134h1v3h-1zM336 133h1v1h-1zM336 137h1v1h-1zM345 134h1v3h-1zM344 133h1v1h-1zM344 137h1v1h-1zM353 134h1v3h-1zM352 133h1v1h-1zM352 137h1v1h-1zM361 134h1v3h-1zM360 133h1v1h-1zM360 137h1v1h-1zM369 134h1v3h-1zM368 133h1v1h-1zM368 137h1v1h-1zM377 134h1v3h-1zM376 133h1v1h-1zM376 137h1v1h-1zM385 134h1v3h-1zM384 133h1v1h-1zM384 137h1v1h-1zM393 134h1v3h-1zM392 133h1v1h-1zM392 137h1v1h-1zM401 134h1v3h-1zM400 133h1v1h-1zM400 137h1v1h-1zM409 134h1v3h-1zM408 133h1v1h-1zM408 137h1v1h-1zM417 134h1v3h-1zM416 133h1v1h-1zM416 137h1v1h-1zM425 134h1v3h-1zM424 133h1v1h-1zM424 137h1v1h-1zM433 134h1v3h-1zM432 133h1v1h-1zM432 137h1v1h-1zM441 134h1v3h-1zM440 133h1v1h-1zM440 137h1v1h-1zM449 134h1v3h-1zM448 133h1v1h-1zM448 137h1v1h-1zM457 134h1v3h-1zM456 133h1v1h-1zM456 137h1v1h-1zM465 134h1v3h-1zM464 133h1v1h-1zM464 137h1v1h-1zM473 134h1v3h-1zM472 133h1v1h-1zM472 137h1v1h-1zM481 134h1v3h-1zM480 133h1v1h-1zM480 137h1v1h-1zM489 134h1v3h-1zM488 133h1v1h-1zM488 137h1v1h-1zM497 134h1v3h-1zM496 133h1v1h-1zM496 137h1v1h-1zM505 134h1v3h-1zM504 133h1v1h-1zM504 137h1v1h-1zM513 134h1v3h-1zM512 133h1v1h-1zM512 137h1v1h-1zM521 134h1v3h-1zM520 133h1v1h-1zM520 137h1v1h-1zM529 134h1v3h-1zM528 133h1v1h-1zM528 137h1v1h-1zM537 134h1v3h-1zM536 133h1v1h-1zM536 137h1v1h-1zM545 134h1v3h-1zM544 133h1v1h-1zM544 137h1v1h-1zM553 134h1v3h-1zM552 133h1v1h-1zM552 137h1v1h-1zM561 134h1v3h-1zM560 133h1v1h-1zM560 137h1v1h-1zM569 134h1v3h-1zM568 133h1v1h-1zM568 137h1v1h-1zM577 134h1v3h-1zM576 133h1v1h-1zM576 137h1v1h-1zM585 134h1v3h-1zM584 133h1v1h-1zM584 137h1v1h-1zM593 134h1v3h-1zM592 133h1v1h-1zM592 137h1v1h-1zM601 134h1v3h-1zM600 133h1v1h-1zM600 137h1v1h-1zM609 134h1v3h-1zM608 133h1v1h-1zM608 137h1v1h-1zM617 134h1v3h-1zM616 133h1v1h-1zM616 137h1v1h-1zM625 134h1v3h-1zM624 133h1v1h-1zM624 137h1v1h-1zM633 134h1v3h-1zM632 133h1v1h-1zM632 137h1v1h-1zM641 134h1v3h-1zM640 133h1v1h-1zM640 137h1v1h-1zM649 134h1v3h-1zM648 133h1v1h-1zM648 137h1v1h-1zM657 134h1v3h-1zM656 133h1v1h-1zM656 137h1v1h-1zM665 134h1v3h-1zM664 133h1v1h-1zM664 137h1v1h-1zM673 134h1v3h-1zM672 133h1v1h-1zM672 137h1v1h-1zM681 134h1v3h-1zM680 133h1v1h-1zM680 137h1v1h-1zM689 134h1v3h-1zM688 133h1v1h-1zM688 137h1v1h-1zM697 134h1v3h-1zM696 133h1v1h-1zM696 137h1v1h-1zM705 134h1v3h-1zM704 133h1v1h-1zM704 137h1v1h-1zM713 134h1v3h-1zM712 133h1v1h-1zM712 137h1v1h-1zM721 134h1v3h-1zM720 133h1v1h-1zM720 137h1v1h-1zM729 134h1v3h-1zM728 133h1v1h-1zM728 137h1v1h-1zM737 134h1v3h-1zM736 133h1v1h-1zM736 137h1v1h-1zM745 134h1v3h-1zM744 133h1v1h-1zM744 137h1v1h-1zM753 134h1v3h-1zM752 133h1v1h-1zM752 137h1v1h-1zM761 134h1v3h-1zM760 133h1v1h-1zM760 137h1v1h-1zM769 134h1v3h-1zM768 133h1v1h-1zM768 137h1v1h-1zM777 134h1v3h-1zM776 133h1v1h-1zM776 137h1v1h-1zM785 134h1v3h-1zM784 133h1v1h-1zM784 137h1v1h-1zM793 134h1v3h-1zM792 133h1v1h-1zM792 137h1v1h-1zM801 134h1v3h-1zM800 133h1v1h-1zM800 137h1v1h-1zM809 134h1v3h-1zM808 133h1v1h-1zM808 137h1v1h-1zM817 134h1v3h-1zM816 133h1v1h-1zM816 137h1v1h-1zM825 134h1v3h-1zM824 133h1v1h-1zM824 137h1v1h-1zM833 134h1v3h-1zM832 133h1v1h-1zM832 137h1v1h-1zM841 134h1v3h-1zM840 133h1v1h-1zM840 137h1v1h-1zM849 134h1v3h-1zM848 133h1v1h-1zM848 137h1v1h-1zM857 134h1v3h-1zM856 133h1v1h-1zM856 137h1v1h-1zM865 134h1v3h-1zM864 133h1v1h-1zM864 137h1v1h-1zM873 134h1v3h-1zM872 133h1v1h-1zM872 137h1v1h-1zM881 134h1v3h-1zM880 133h1v1h-1zM880 137h1v1h-1zM889 134h1v3h-1zM888 133h1v1h-1zM888 137h1v1h-1zM897 134h1v3h-1zM896 133h1v1h-1zM896 137h1v1h-1zM905 134h1v3h-1zM904 133h1v1h-1zM904 137h1v1h-1zM913 134h1v3h-1zM912 133h1v1h-1zM912 137h1v1h-1zM921 134h1v3h-1zM920 133h1v1h-1zM920 137h1v1h-1zM929 134h1v3h-1zM928 133h1v1h-1zM928 137h1v1h-1zM937 134h1v3h-1zM936 133h1v1h-1zM936 137h1v1h-1zM945 134h1v3h-1zM944 133h1v1h-1zM944 137h1v1h-1z" fill="#0c0c78"/>
<path d="M159 132h1v1h-1zM159 138h1v1h-1zM167 132h1v1h-1zM167 138h1v1h-1zM175 132h1v1h-1zM175 138h1v1h-1zM183 132h1v1h-1zM183 138h1v1h-1zM191 132h1v1h-1zM191 138h1v1h-1zM199 132h1v1h-1zM199 138h1v1h-1zM207 132h1v1h-1zM207 138h1v1h-1zM215 132h1v1h-1zM215 138h1v1h-1zM223 132h1v1h-1zM223 138h1v1h-1zM231 132h1v1h-1zM231 138h1v1h-1zM239 132h1v1h-1zM239 138h1v1h-1zM247 132h1v1h-1zM247 138h1v1h-1zM255 132h1v1h-1zM255 138h1v1h-1zM263 132h1v1h-1zM263 138h1v1h-1zM271 132h1v1h-1zM271 138h1v1h-1zM279 132h1v1h-1zM279 138h1v1h-1zM287 132h1v1h-1zM287 138h1v1h-1zM295 132h1v1h-1zM295 138h1v1h-1zM303 132h1v1h-1zM303 138h1v1h-1zM311 132h1v1h-1zM311 138h1v1h-1zM319 132h1v1h-1zM319 138h1v1h-1zM327 132h1v1h-1zM327 138h1v1h-1zM335 132h1v1h-1zM335 138h1v1h-1zM343 132h1v1h-1zM343 138h1v1h-1zM351 132h1v1h-1zM351 138h1v1h-1zM359 132h1v1h-1zM359 138h1v1h-1zM367 132h1v1h-1zM367 138h1v1h-1zM375 132h1v1h-1zM375 138h1v1h-1zM383 132h1v1h-1zM383 138h1v1h-1zM391 132h1v1h-1zM391 138h1v1h-1zM399 132h1v1h-1zM399 138h1v1h-1zM407 132h1v1h-1zM407 138h1v1h-1zM415 132h1v1h-1zM415 138h1v1h-1zM423 132h1v1h-1zM423 138h1v1h-1zM431 132h1v1h-1zM431 138h1v1h-1zM439 132h1v1h-1zM439 138h1v1h-1zM447 132h1v1h-1zM447 138h1v1h-1zM455 132h1v1h-1zM455 138h1v1h-1zM463 132h1v1h-1zM463 138h1v1h-1zM471 132h1v1h-1zM471 138h1v1h-1zM479 132h1v1h-1zM479 138h1v1h-1zM487 132h1v1h-1zM487 138h1v1h-1zM495 132h1v1h-1zM495 138h1v1h-1zM503 132h1v1h-1zM503 138h1v1h-1zM511 132h1v1h-1zM511 138h1v1h-1zM519 132h1v1h-1zM519 138h1v1h-1zM527 132h1v1h-1zM527 138h1v1h-1zM535 132h1v1h-1zM535 138h1v1h-1zM543 132h1v1h-1zM543 138h1v1h-1zM551 132h1v1h-1zM551 138h1v1h-1zM559 132h1v1h-1zM559 138h1v1h-1zM567 132h1v1h-1zM567 138h1v1h-1zM575 132h1v1h-1zM575 138h1v1h-1zM583 132h1v1h-1zM583 138h1v1h-1zM591 132h1v1h-1zM591 138h1v1h-1zM599 132h1v1h-1zM599 138h1v1h-1zM607 132h1v1h-1zM607 138h1v1h-1zM615 132h1v1h-1zM615 138h1v1h-1zM623 132h1v1h-1zM623 138h1v1h-1zM631 132h1v1h-1zM631 138h1v1h-1zM639 132h1v1h-1zM639 138h1v1h-1zM647 132h1v1h-1zM647 138h1v1h-1zM655 132h1v1h-1zM655 138h1v1h-1zM663 132h1v1h-1zM663 138h1v1h-1zM671 132h1v1h-1zM671 138h1v1h-1zM679 132h1v1h-1zM679 138h1v1h-1zM687 132h1v1h-1zM687 138h1v1h-1zM695 132h1v1h-1zM695 138h1v1h-1zM703 132h1v1h-1zM703 138h1v1h-1zM711 132h1v1h-1zM711 138h1v1h-1zM719 132h1v1h-1zM719 138h1v1h-1zM727 132h1v1h-1zM727 138h1v1h-1zM735 132h1v1h-1zM735 138h1v1h-1zM743 132h1v1h-1zM743 138h1v1h-1zM751 132h1v1h-1zM751 138h1v1h-1zM759 132h1v1h-1zM759 138h1v1h-1zM767 132h1v1h-1zM767 138h1v1h-1zM775 132h1v1h-1zM775 138h1v1h-1zM783 132h1v1h-1zM783 138h1v1h-1zM791 132h1v1h-1zM791 138h1v1h-1zM799 132h1v1h-1zM799 138h1v1h-1zM807 132h1v1h-1zM807 138h1v1h-1zM815 132h1v1h-1zM815 138h1v1h-1zM823 132h1v1h-1zM823 138h1v1h-1zM831 132h1v1h-1zM831 138h1v1h-1zM839 132h1v1h-1zM839 138h1v1h-1zM847 132h1v1h-1zM847 138h1v1h-1zM855 132h1v1h-1zM855 138h1v1h-1zM863 132h1v1h-1zM863 138h1v1h-1zM871 132h1v1h-1zM871 138h1v1h-1zM879 132h1v1h-1zM879 138h1v1h-1zM887 132h1v1h-1zM887 138h1v1h-1zM895 132h1v1h-1zM895 138h1v1h-1zM903 132h1v1h-1zM903 138h1v1h-1zM911 132h1v1h-1zM911 138h1v1h-1zM919 132h1v1h-1zM919 138h1v1h-1zM927 132h1v1h-1zM927 138h1v1h-1zM935 132h1v1h-1zM935 138h1v1h-1zM943 132h1v1h-1zM943 138h1v1h-1z" fill="#0c0c78" fill-opacity="0.45"/>
<path d="M157 151h792v1h-792zM161 150h1v3h-1zM160 149h1v1h-1zM160 153h1v1h-1zM169 150h1v3h-1zM168 149h1v1h-1zM168 153h1v1h-1zM177 150h1v3h-1zM176 149h1v1h-1zM176 153h1v1h-1zM185 150h1v3h-1zM184 149h1v1h-1zM184 153h1v1h-1zM193 150h1v3h-1zM192 149h1v1h-1zM192 153h1v1h-1zM201 150h1v3h-1zM200 149h1v1h-1zM200 153h1v1h-1zM209 150h1v3h-1zM208 149h1v1h-1zM208 153h1v1h-1zM217 150h1v3h-1zM216 149h1v1h-1zM216 153h1v1h-1zM225 150h1v3h-1zM224 149h1v1h-1zM224 153h1v1h-1zM233 150h1v3h-1zM232 149h1v1h-1zM232 153h1v1h-1zM241 150h1v3h-1zM240 149h1v1h-1zM240 153h1v1h-1zM249 150h1v3h-1zM248 149h1v1h-1zM248 153h1v1h-1zM257 150h1v3h-1zM256 149h1v1h-1zM256 153h1v1h-1zM265 150h1v3h-1zM264 149h1v1h-1zM264 153h1v1h-1zM273 150h1v3h-1zM272 149h1v1h-1zM272 153h1v1h-1zM281 150h1v3h-1zM280 149h1v1h-1zM280 153h1v1h-1zM289 150h1v3h-1zM288 149h1v1h-1zM288 153h1v1h-1zM297 150h1v3h-1zM296 149h1v1h-1zM296 153h1v1h-1zM305 150h1v3h-1zM304 149h1v1h-1zM304 153h1v1h-1zM313 150h1v3h-1zM312 149h1v1h-1zM312 153h1v1h-1zM321 150h1v3h-1zM320 149h1v1h-1zM320 153h1v1h-1zM329 150h1v3h-1zM328 149h1v1h-1zM328 153h1v1h-1zM337 150h1v3h-1zM336 149h1v1h-1zM336 153h1v1h-1zM345 150h1v3h-1zM344 149h1v1h-1zM344 153h1v1h-1zM353 150h1v3h-1zM352 149h1v1h-1zM352 153h1v1h-1zM361 150h1v3h-1zM360 149h1v1h-1zM360 153h1v1h-1zM369 150h1v3h-1zM368 149h1v1h-1zM368 153h1v1h-1zM377 150h1v3h-1zM376 149h1v1h-1zM376 153h1v1h-1zM385 150h1v3h-1zM384 149h1v1h-1zM384 153h1v1h-1zM393 150h1v3h-1zM392 149h1v1h-1zM392 153h1v1h-1zM401 150h1v3h-1zM400 149h1v1h-1zM400 153h1v1h-1zM409 150h1v3h-1zM408 149h1v1h-1zM408 153h1v1h-1zM417 150h1v3h-1zM416 149h1v1h-1zM416 153h1v1h-1zM425 150h1v3h-1zM424 149h1v1h-1zM424 153h1v1h-1zM433 150h1v3h-1zM432 149h1v1h-1zM432 153h1v1h-1zM441 150h1v3h-1zM440 149h1v1h-1zM440 153h1v1h-1zM449 150h1v3h-1zM448 149h1v1h-1zM448 153h1v1h-1zM457 150h1v3h-1zM456 149h1v1h-1zM456 153h1v1h-1zM465 150h1v3h-1zM464 149h1v1h-1zM464 153h1v1h-1zM473 150h1v3h-1zM472 149h1v1h-1zM472 153h1v1h-1zM481 150h1v3h-1zM480 149h1v1h-1zM480 153h1v1h-1zM489 150h1v3h-1zM488 149h1v1h-1zM488 153h1v1h-1zM497 150h1v3h-1zM496 149h1v1h-1zM496 153h1v1h-1zM505 150h1v3h-1zM504 149h1v1h-1zM504 153h1v1h-1zM513 150h1v3h-1zM512 149h1v1h-1zM512 153h1v1h-1zM521 150h1v3h-1zM520 149h1v1h-1zM520 153h1v1h-1zM529 150h1v3h-1zM528 149h1v1h-1zM528 153h1v1h-1zM537 150h1v3h-1zM536 149h1v1h-1zM536 153h1v1h-1zM545 150h1v3h-1zM544 149h1v1h-1zM544 153h1v1h-1zM553 150h1v3h-1zM552 149h1v1h-1zM552 153h1v1h-1zM561 150h1v3h-1zM560 149h1v1h-1zM560 153h1v1h-1zM569 150h1v3h-1zM568 149h1v1h-1zM568 153h1v1h-1zM577 150h1v3h-1zM576 149h1v1h-1zM576 153h1v1h-1zM585 150h1v3h-1zM584 149h1v1h-1zM584 153h1v1h-1zM593 150h1v3h-1zM592 149h1v1h-1zM592 153h1v1h-1zM601 150h1v3h-1zM600 149h1v1h-1zM600 153h1v1h-1zM609 150h1v3h-1zM608 149h1v1h-1zM608 153h1v1h-1zM617 150h1v3h-1zM616 149h1v1h-1zM616 153h1v1h-1zM625 150h1v3h-1zM624 149h1v1h-1zM624 153h1v1h-1zM633 150h1v3h-1zM632 149h1v1h-1zM632 153h1v1h-1zM641 150h1v3h-1zM640 149h1v1h-1zM640 153h1v1h-1zM649 150h1v3h-1zM648 149h1v1h-1zM648 153h1v1h-1zM657 150h1v3h-1zM656 149h1v1h-1zM656 153h1v1h-1zM665 150h1v3h-1zM664 149h1v1h-1zM664 153h1v1h-1zM673 150h1v3h-1zM672 149h1v1h-1zM672 153h1v1h-1zM681 150h1v3h-1zM680 149h1v1h-1zM680 153h1v1h-1zM689 150h1v3h-1zM688 149h1v1h-1zM688 153h1v1h-1zM697 150h1v3h-1zM696 149h1v1h-1zM696 153h1v1h-1zM705 150h1v3h-1zM704 149h1v1h-1zM704 153h1v1h-1zM713 150h1v3h-1zM712 149h1v1h-1zM712 153h1v1h-1zM721 150h1v3h-1zM720 149h1v1h-1zM720 153h1v1h-1zM729 150h1v3h-1zM728 149h1v1h-1zM728 153h1v1h-1zM737 150h1v3h-1zM736 149h1v1h-1zM736 153h1v1h-1zM745 150h1v3h-1zM744 149h1v1h-1zM744 153h1v1h-1zM753 150h1v3h-1zM752 149h1v1h-1zM752 153h1v1h-1zM761 150h1v3h-1zM760 149h1v1h-1zM760 153h1v1h-1zM769 150h1v3h-1zM768 149h1v1h-1zM768 153h1v1h-1zM777 150h1v3h-1zM776 149h1v1h-1zM776 153h1v1h-1zM785 150h1v3h-1zM784 149h1v1h-1zM784 153h1v1h-1zM793 150h1v3h-1zM792 149h1v1h-1zM792 153h1v1h-1zM801 150h1v3h-1zM800 149h1v1h-1zM800 153h1v1h-1zM809 150h1v3h-1zM808 149h1v1h-1zM808 153h1v1h-1zM817 150h1v3h-1zM816 149h1v1h-1zM816 153h1v1h-1zM825 150h1v3h-1zM824 149h1v1h-1zM824 153h1v1h-1zM833 150h1v3h-1zM832 149h1v1h-1zM832 153h1v1h-1zM841 150h1v3h-1zM840 149h1v1h-1zM840 153h1v1h-1zM849 150h1v3h-1zM848 149h1v1h-1zM848 153h1v1h-1zM857 150h1v3h-1zM856 149h1v1h-1zM856 153h1v1h-1zM865 150h1v3h-1zM864 149h1v1h-1zM864 153h1v1h-1zM873 150h1v3h-1zM872 149h1v1h-1zM872 153h1v1h-1zM881 150h1v3h-1zM880 149h1v1h-1zM880 153h1v1h-1zM889 150h1v3h-1zM888 149h1v1h-1zM888 153h1v1h-1zM897 150h1v3h-1zM896 149h1v1h-1zM896 153h1v1h-1zM905 150h1v3h-1zM904 149h1v1h-1zM904 153h1v1h-1zM913 150h1v3h-1zM912 149h1v1h-1zM912 153h1v1h-1zM921 150h1v3h-1zM920 149h1v1h-1zM920 153h1v1h-1zM929 150h1v3h-1zM928 149h1v1h-1zM928 153h1v1h-1zM937 150h1v3h-1zM936 149h1v1h-1zM936 153h1v1h-1zM945 150h1v3h-1zM944 149h1v1h-1zM944 153h1v1h-1z" fill="#0c0c78"/>
<path d="M159 148h1v1h-1zM159 154h1v1h-1zM167 148h1v1h-1zM167 154h1v1h-1zM175 148h1v1h-1zM175 154h1v1h-1zM183 148h1v1h-1zM183 154h1v1h-1zM191 148h1v1h-1zM191 154h1v1h-1zM199 148h1v1h-1zM199 154h1v1h-1zM207 148h1v1h-1zM207 154h1v1h-1zM215 148h1v1h-1zM215 154h1v1h-1zM223 148h1v1h-1zM223 154h1v1h-1zM231 148h1v1h-1zM231 154h1v1h-1zM239 148h1v1h-1zM239 154h1v1h-1zM247 148h1v1h-1zM247 154h1v1h-1zM255 148h1v1h-1zM255 154h1v1h-1zM263 148h1v1h-1zM263 154h1v1h-1zM271 148h1v1h-1zM271 154h1v1h-1zM279 148h1v1h-1zM279 154h1v1h-1zM287 148h1v1h-1zM287 154h1v1h-1zM295 148h1v1h-1zM295 154h1v1h-1zM303 148h1v1h-1zM303 154h1v1h-1zM311 148h1v1h-1zM311 154h1v1h-1zM319 148h1v1h-1zM319 154h1v1h-1zM327 148h1v1h-1zM327 154h1v1h-1zM335 148h1v1h-1zM335 154h1v1h-1zM343 148h1v1h-1zM343 154h1v1h-1zM351 148h1v1h-1zM351 154h1v1h-1zM359 148h1v1h-1zM359 154h1v1h-1zM367 148h1v1h-1zM367 154h1v1h-1zM375 148h1v1h-1zM375 154h1v1h-1zM383 148h1v1h-1zM383 154h1v1h-1zM391 148h1v1h-1zM391 154h1v1h-1zM399 148h1v1h-1zM399 154h1v1h-1zM407 148h1v1h-1zM407 154h1v1h-1zM415 148h1v1h-1zM415 154h1v1h-1zM423 148h1v1h-1zM423 154h1v1h-1zM431 148h1v1h-1zM431 154h1v1h-1zM439 148h1v1h-1zM439 154h1v1h-1zM447 148h1v1h-1zM447 154h1v1h-1zM455 148h1v1h-1zM455 154h1v1h-1zM463 148h1v1h-1zM463 154h1v1h-1zM471 148h1v1h-1zM471 154h1v1h-1zM479 148h1v1h-1zM479 154h1v1h-1zM487 148h1v1h-1zM487 154h1v1h-1zM495 148h1v1h-1zM495 154h1v1h-1zM503 148h1v1h-1zM503 154h1v1h-1zM511 148h1v1h-1zM511 154h1v1h-1zM519 148h1v1h-1zM519 154h1v1h-1zM527 148h1v1h-1zM527 154h1v1h-1zM535 148h1v1h-1zM535 154h1v1h-1zM543 148h1v1h-1zM543 154h1v1h-1zM551 148h1v1h-1zM551 154h1v1h-1zM559 148h1v1h-1zM559 154h1v1h-1zM567 148h1v1h-1zM567 154h1v1h-1zM575 148h1v1h-1zM575 154h1v1h-1zM583 148h1v1h-1zM583 154h1v1h-1zM591 148h1v1h-1zM591 154h1v1h-1zM599 148h1v1h-1zM599 154h1v1h-1zM607 148h1v1h-1zM607 154h1v1h-1zM615 148h1v1h-1zM615 154h1v1h-1zM623 148h1v1h-1zM623 154h1v1h-1zM631 148h1v1h-1zM631 154h1v1h-1zM639 148h1v1h-1zM639 154h1v1h-1zM647 148h1v1h-1zM647 154h1v1h-1zM655 148h1v1h-1zM655 154h1v1h-1zM663 148h1v1h-1zM663 154h1v1h-1zM671 148h1v1h-1zM671 154h1v1h-1zM679 148h1v1h-1zM679 154h1v1h-1zM687 148h1v1h-1zM687 154h1v1h-1zM695 148h1v1h-1zM695 154h1v1h-1zM703 148h1v1h-1zM703 154h1v1h-1zM711 148h1v1h-1zM711 154h1v1h-1zM719 148h1v1h-1zM719 154h1v1h-1zM727 148h1v1h-1zM727 154h1v1h-1zM735 148h1v1h-1zM735 154h1v1h-1zM743 148h1v1h-1zM743 154h1v1h-1zM751 148h1v1h-1zM751 154h1v1h-1zM759 148h1v1h-1zM759 154h1v1h-1zM767 148h1v1h-1zM767 154h1v1h-1zM775 148h1v1h-1zM775 154h1v1h-1zM783 148h1v1h-1zM783 154h1v1h-1zM791 148h1v1h-1zM791 154h1v1h-1zM799 148h1v1h-1zM799 154h1v1h-1zM807 148h1v1h-1zM807 154h1v1h-1zM815 148h1v1h-1zM815 154h1v1h-1zM823 148h1v1h-1zM823 154h1v1h-1zM831 148h1v1h-1zM831 154h1v1h-1zM839 148h1v1h-1zM839 154h1v1h-1zM847 148h1v1h-1zM847 154h1v1h-1zM855 148h1v1h-1zM855 154h1v1h-1zM863 148h1v1h-1zM863 154h1v1h-1zM871 148h1v1h-1zM871 154h1v1h-1zM879 148h1v1h-1zM879 154h1v1h-1zM887 148h1v1h-1zM887 154h1v1h-1zM895 148h1v1h-1zM895 154h1v1h-1zM903 148h1v1h-1zM903 154h1v1h-1zM911 148h1v1h-1zM911 154h1v1h-1zM919 148h1v1h-1zM919 154h1v1h-1zM927 148h1v1h-1zM927 154h1v1h-1zM935 148h1v1h-1zM935 154h1v1h-1zM943 148h1v1h-1zM943 154h1v1h-1z" fill="#0c0c78" fill-opacity="0.45"/>
<path d="M157 167h792v1h-792zM161 166h1v3h-1zM160 165h1v1h-1zM160 169h1v1h-1zM169 166h1v3h-1zM168 165h1v1h-1zM168 169h1v1h-1zM177 166h1v3h-1zM176 165h1v1h-1zM176 169h1v1h-1zM185 166h1v3h-1zM184 165h1v1h-1zM184 169h1v1h-1zM193 166h1v3h-1zM192 165h1v1h-1zM192 169h1v1h-1zM201 166h1v3h-1zM200 165h1v1h-1zM200 169h1v1h-1zM209 166h1v3h-1zM208 165h1v1h-1zM208 169h1v1h-1zM217 166h1v3h-1zM216 165h1v1h-1zM216 169h1v1h-1zM225 166h1v3h-1zM224 165h1v1h-1zM224 169h1v1h-1zM233 166h1v3h-1zM232 165h1v1h-1zM232 169h1v1h-1zM241 166h1v3h-1zM240 165h1v1h-1zM240 169h1v1h-1zM249 166h1v3h-1zM248 165h1v1h-1zM248 169h1v1h-1zM257 166h1v3h-1zM256 165h1v1h-1zM256 169h1v1h-1zM265 166h1v3h-1zM264 165h1v1h-1zM264 169h1v1h-1zM273 166h1v3h-1zM272 165h1v1h-1zM272 169h1v1h-1zM281 166h1v3h-1zM280 165h1v1h-1zM280 169h1v1h-1zM289 166h1v3h-1zM288 165h1v1h-1zM288 169h1v1h-1zM297 166h1v3h-1zM296 165h1v1h-1zM296 169h1v1h-1zM305 166h1v3h-1zM304 165h1v1h-1zM304 169h1v1h-1zM313 166h1v3h-1zM312 165h1v1h-1zM312 169h1v1h-1zM321 166h1v3h-1zM320 165h1v1h-1zM320 169h1v1h-1zM329 166h1v3h-1zM328 165h1v1h-1zM328 169h1v1h-1zM337 166h1v3h-1zM336 165h1v1h-1zM336 169h1v1h-1zM345 166h1v3h-1zM344 165h1v1h-1zM344 169h1v1h-1zM353 166h1v3h-1zM352 165h1v1h-1zM352 169h1v1h-1zM361 166h1v3h-1zM360 165h1v1h-1zM360 169h1v1h-1zM369 166h1v3h-1zM368 165h1v1h-1zM368 169h1v1h-1zM377 166h1v3h-1zM376 165h1v1h-1zM376 169h1v1h-1zM385 166h1v3h-1zM384 165h1v1h-1zM384 169h1v1h-1zM393 166h1v3h-1zM392 165h1v1h-1zM392 169h1v1h-1zM401 166h1v3h-1zM400 165h1v1h-1zM400 169h1v1h-1zM409 166h1v3h-1zM408 165h1v1h-1zM408 169h1v1h-1zM417 166h1v3h-1zM416 165h1v1h-1zM416 169h1v1h-1zM425 166h1v3h-1zM424 165h1v1h-1zM424 169h1v1h-1zM433 166h1v3h-1zM432 165h1v1h-1zM432 169h1v1h-1zM441 166h1v3h-1zM440 165h1v1h-1zM440 169h1v1h-1zM449 166h1v3h-1zM448 165h1v1h-1zM448 169h1v1h-1zM457 166h1v3h-1zM456 165h1v1h-1zM456 169h1v1h-1zM465 166h1v3h-1zM464 165h1v1h-1zM464 169h1v1h-1zM473 166h1v3h-1zM472 165h1v1h-1zM472 169h1v1h-1zM481 166h1v3h-1zM480 165h1v1h-1zM480 169h1v1h-1zM489 166h1v3h-1zM488 165h1v1h-1zM488 169h1v1h-1zM497 166h1v3h-1zM496 165h1v1h-1zM496 169h1v1h-1zM505 166h1v3h-1zM504 165h1v1h-1zM504 169h1v1h-1zM513 166h1v3h-1zM512 165h1v1h-1zM512 169h1v1h-1zM521 166h1v3h-1zM520 165h1v1h-1zM520 169h1v1h-1zM529 166h1v3h-1zM528 165h1v1h-1zM528 169h1v1h-1zM537 166h1v3h-1zM536 165h1v1h-1zM536 169h1v1h-1zM545 166h1v3h-1zM544 165h1v1h-1zM544 169h1v1h-1zM553 166h1v3h-1zM552 165h1v1h-1zM552 169h1v1h-1zM561 166h1v3h-1zM560 165h1v1h-1zM560 169h1v1h-1zM569 166h1v3h-1zM568 165h1v1h-1zM568 169h1v1h-1zM577 166h1v3h-1zM576 165h1v1h-1zM576 169h1v1h-1zM585 166h1v3h-1zM584 165h1v1h-1zM584 169h1v1h-1zM593 166h1v3h-1zM592 165h1v1h-1zM592 169h1v1h-1zM601 166h1v3h-1zM600 165h1v1h-1zM600 169h1v1h-1zM609 166h1v3h-1zM608 165h1v1h-1zM608 169h1v1h-1zM617 166h1v3h-1zM616 165h1v1h-1zM616 169h1v1h-1zM625 166h1v3h-1zM624 165h1v1h-1zM624 169h1v1h-1zM633 166h1v3h-1zM632 165h1v1h-1zM632 169h1v1h-1zM641 166h1v3h-1zM640 165h1v1h-1zM640 169h1v1h-1zM649 166h1v3h-1zM648 165h1v1h-1zM648 169h1v1h-1zM657 166h1v3h-1zM656 165h1v1h-1zM656 169h1v1h-1zM665 166h1v3h-1zM664 165h1v1h-1zM664 169h1v1h-1zM673 166h1v3h-1zM672 165h1v1h-1zM672 169h1v1h-1zM681 166h1v3h-1zM680 165h1v1h-1zM680 169h1v1h-1zM689 166h1v3h-1zM688 165h1v1h-1zM688 169h1v1h-1zM697 166h1v3h-1zM696 165h1v1h-1zM696 169h1v1h-1zM705 166h1v3h-1zM704 165h1v1h-1zM704 169h1v1h-1zM713 166h1v3h-1zM712 165h1v1h-1zM712 169h1v1h-1zM721 166h1v3h-1zM720 165h1v1h-1zM720 169h1v1h-1zM729 166h1v3h-1zM728 165h1v1h-1zM728 169h1v1h-1zM737 166h1v3h-1zM736 165h1v1h-1zM736 169h1v1h-1zM745 166h1v3h-1zM744 165h1v1h-1zM744 169h1v1h-1zM753 166h1v3h-1zM752 165h1v1h-1zM752 169h1v1h-1zM761 166h1v3h-1zM760 165h1v1h-1zM760 169h1v1h-1zM769 166h1v3h-1zM768 165h1v1h-1zM768 169h1v1h-1zM777 166h1v3h-1zM776 165h1v1h-1zM776 169h1v1h-1zM785 166h1v3h-1zM784 165h1v1h-1zM784 169h1v1h-1zM793 166h1v3h-1zM792 165h1v1h-1zM792 169h1v1h-1zM801 166h1v3h-1zM800 165h1v1h-1zM800 169h1v1h-1zM809 166h1v3h-1zM808 165h1v1h-1zM808 169h1v1h-1zM817 166h1v3h-1zM816 165h1v1h-1zM816 169h1v1h-1zM825 166h1v3h-1zM824 165h1v1h-1zM824 169h1v1h-1zM833 166h1v3h-1zM832 165h1v1h-1zM832 169h1v1h-1zM841 166h1v3h-1zM840 165h1v1h-1zM840 169h1v1h-1zM849 166h1v3h-1zM848 165h1v1h-1zM848 169h1v1h-1zM857 166h1v3h-1zM856 165h1v1h-1zM856 169h1v1h-1zM865 166h1v3h-1zM864 165h1v1h-1zM864 169h1v1h-1zM873 166h1v3h-1zM872 165h1v1h-1zM872 169h1v1h-1zM881 166h1v3h-1zM880 165h1v1h-1zM880 169h1v1h-1zM889 166h1v3h-1zM888 165h1v1h-1zM888 169h1v1h-1zM897 166h1v3h-1zM896 165h1v1h-1zM896 169h1v1h-1zM905 166h1v3h-1zM904 165h1v1h-1zM904 169h1v1h-1zM913 166h1v3h-1zM912 165h1v1h-1zM912 169h1v1h-1zM921 166h1v3h-1zM920 165h1v1h-1zM920 169h1v1h-1zM929 166h1v3h-1zM928 165h1v1h-1zM928 169h1v1h-1zM937 166h1v3h-1zM936 165h1v1h-1zM936 169h1v1h-1zM945 166h1v3h-1zM944 165h1v1h-1zM944 169h1v1h-1z" fill="#0c0c78"/>
<path d="M159 164h1v1h-1zM159 170h1v1h-1zM167 164h1v1h-1zM167 170h1v1h-1zM175 164h1v1h-1zM175 170h1v1h-1zM183 164h1v1h-1zM183 170h1v1h-1zM191 164h1v1h-1zM191 170h1v1h-1zM199 164h1v1h-1zM199 170h1v1h-1zM207 164h1v1h-1zM207 170h1v1h-1zM215 164h1v1h-1zM215 170h1v1h-1zM223 164h1v1h-1zM223 170h1v1h-1zM231 164h1v1h-1zM231 170h1v1h-1zM239 164h1v1h-1zM239 170h1v1h-1zM247 164h1v1h-1zM247 170h1v1h-1zM255 164h1v1h-1zM255 170h1v1h-1zM263 164h1v1h-1zM263 170h1v1h-1zM271 164h1v1h-1zM271 170h1v1h-1zM279 164h1v1h-1zM279 170h1v1h-1zM287 164h1v1h-1zM287 170h1v1h-1zM295 164h1v1h-1zM295 170h1v1h-1zM303 164h1v1h-1zM303 170h1v1h-1zM311 164h1v1h-1zM311 170h1v1h-1zM319 164h1v1h-1zM319 170h1v1h-1zM327 164h1v1h-1zM327 170h1v1h-1zM335 164h1v1h-1zM335 170h1v1h-1zM343 164h1v1h-1zM343 170h1v1h-1zM351 164h1v1h-1zM351 170h1v1h-1zM359 164h1v1h-1zM359 170h1v1h-1zM367 164h1v1h-1zM367 170h1v1h-1zM375 164h1v1h-1zM375 170h1v1h-1zM383 164h1v1h-1zM383 170h1v1h-1zM391 164h1v1h-1zM391 170h1v1h-1zM399 164h1v1h-1zM399 170h1v1h-1zM407 164h1v1h-1zM407 170h1v1h-1zM415 164h1v1h-1zM415 170h1v1h-1zM423 164h1v1h-1zM423 170h1v1h-1zM431 164h1v1h-1zM431 170h1v1h-1zM439 164h1v1h-1zM439 170h1v1h-1zM447 164h1v1h-1zM447 170h1v1h-1zM455 164h1v1h-1zM455 170h1v1h-1zM463 164h1v1h-1zM463 170h1v1h-1zM471 164h1v1h-1zM471 170h1v1h-1zM479 164h1v1h-1zM479 170h1v1h-1zM487 164h1v1h-1zM487 170h1v1h-1zM495 164h1v1h-1zM495 170h1v1h-1zM503 164h1v1h-1zM503 170h1v1h-1zM511 164h1v1h-1zM511 170h1v1h-1zM519 164h1v1h-1zM519 170h1v1h-1zM527 164h1v1h-1zM527 170h1v1h-1zM535 164h1v1h-1zM535 170h1v1h-1zM543 164h1v1h-1zM543 170h1v1h-1zM551 164h1v1h-1zM551 170h1v1h-1zM559 164h1v1h-1zM559 170h1v1h-1zM567 164h1v1h-1zM567 170h1v1h-1zM575 164h1v1h-1zM575 170h1v1h-1zM583 164h1v1h-1zM583 170h1v1h-1zM591 164h1v1h-1zM591 170h1v1h-1zM599 164h1v1h-1zM599 170h1v1h-1zM607 164h1v1h-1zM607 170h1v1h-1zM615 164h1v1h-1zM615 170h1v1h-1zM623 164h1v1h-1zM623 170h1v1h-1zM631 164h1v1h-1zM631 170h1v1h-1zM639 164h1v1h-1zM639 170h1v1h-1zM647 164h1v1h-1zM647 170h1v1h-1zM655 164h1v1h-1zM655 170h1v1h-1zM663 164h1v1h-1zM663 170h1v1h-1zM671 164h1v1h-1zM671 170h1v1h-1zM679 164h1v1h-1zM679 170h1v1h-1zM687 164h1v1h-1zM687 170h1v1h-1zM695 164h1v1h-1zM695 170h1v1h-1zM703 164h1v1h-1zM703 170h1v1h-1zM711 164h1v1h-1zM711 170h1v1h-1zM719 164h1v1h-1zM719 170h1v1h-1zM727 164h1v1h-1zM727 170h1v1h-1zM735 164h1v1h-1zM735 170h1v1h-1zM743 164h1v1h-1zM743 170h1v1h-1zM751 164h1v1h-1zM751 170h1v1h-1zM759 164h1v1h-1zM759 170h1v1h-1zM767 164h1v1h-1zM767 170h1v1h-1zM775 164h1v1h-1zM775 170h1v1h-1zM783 164h1v1h-1zM783 170h1v1h-1zM791 164h1v1h-1zM791 170h1v1h-1zM799 164h1v1h-1zM799 170h1v1h-1zM807 164h1v1h-1zM807 170h1v1h-1zM815 164h1v1h-1zM815 170h1v1h-1zM823 164h1v1h-1zM823 170h1v1h-1zM831 164h1v1h-1zM831 170h1v1h-1zM839 164h1v1h-1zM839 170h1v1h-1zM847 164h1v1h-1zM847 170h1v1h-1zM855 164h1v1h-1zM855 170h1v1h-1zM863 164h1v1h-1zM863 170h1v1h-1zM871 164h1v1h-1zM871 170h1v1h-1zM879 164h1v1h-1zM879 170h1v1h-1zM887 164h1v1h-1zM887 170h1v1h-1zM895 164h1v1h-1zM895 170h1v1h-1zM903 164h1v1h-1zM903 170h1v1h-1zM911 164h1v1h-1zM911 170h1v1h-1zM919 164h1v1h-1zM919 170h1v1h-1zM927 164h1v1h-1zM927 170h1v1h-1zM935 164h1v1h-1zM935 170h1v1h-1zM943 164h1v1h-1zM943 170h1v1h-1z" fill="#0c0c78" fill-opacity="0.45"/>
<path d="M157 183h792v1h-792zM161 182h1v3h-1zM160 181h1v1h-1zM160 185h1v1h-1zM169 182h1v3h-1zM168 181h1v1h-1zM168 185h1v1h-1zM177 182h1v3h-1zM176 181h1v1h-1zM176 185h1v1h-1zM185 182h1v3h-1zM184 181h1v1h-1zM184 185h1v1h-1zM193 182h1v3h-1zM192 181h1v1h-1zM192 185h1v1h-1zM201 182h1v3h-1zM200 181h1v1h-1zM200 185h1v1h-1zM209 182h1v3h-1zM208 181h1v1h-1zM208 185h1v1h-1zM217 182h1v3h-1zM216 181h1v1h-1zM216 185h1v1h-1zM225 182h1v3h-1zM224 181h1v1h-1zM224 185h1v1h-1zM233 182h1v3h-1zM232 181h1v1h-1zM232 185h1v1h-1zM241 182h1v3h-1zM240 181h1v1h-1zM240 185h1v1h-1zM249 182h1v3h-1zM248 181h1v1h-1zM248 185h1v1h-1zM257 182h1v3h-1zM256 181h1v1h-1zM256 185h1v1h-1zM265 182h1v3h-1zM264 181h1v1h-1zM264 185h1v1h-1zM273 182h1v3h-1zM272 181h1v1h-1zM272 185h1v1h-1zM281 182h1v3h-1zM280 181h1v1h-1zM280 185h1v1h-1zM289 182h1v3h-1zM288 181h1v1h-1zM288 185h1v1h-1zM297 182h1v3h-1zM296 181h1v1h-1zM296 185h1v1h-1zM305 182h1v3h-1zM304 181h1v1h-1zM304 185h1v1h-1zM313 182h1v3h-1zM312 181h1v1h-1zM312 185h1v1h-1zM321 182h1v3h-1zM320 181h1v1h-1zM320 185h1v1h-1zM329 182h1v3h-1zM328 181h1v1h-1zM328 185h1v1h-1zM337 182h1v3h-1zM336 181h1v1h-1zM336 185h1v1h-1zM345 182h1v3h-1zM344 181h1v1h-1zM344 185h1v1h-1zM353 182h1v3h-1zM352 181h1v1h-1zM352 185h1v1h-1zM361 182h1v3h-1zM360 181h1v1h-1zM360 185h1v1h-1zM369 182h1v3h-1zM368 181h1v1h-1zM368 185h1v1h-1zM377 182h1v3h-1zM376 181h1v1h-1zM376 185h1v1h-1zM385 182h1v3h-1zM384 181h1v1h-1zM384 185h1v1h-1zM393 182h1v3h-1zM392 181h1v1h-1zM392 185h1v1h-1zM401 182h1v3h-1zM400 181h1v1h-1zM400 185h1v1h-1zM409 182h1v3h-1zM408 181h1v1h-1zM408 185h1v1h-1zM417 182h1v3h-1zM416 181h1v1h-1zM416 185h1v1h-1zM425 182h1v3h-1zM424 181h1v1h-1zM424 185h1v1h-1zM433 182h1v3h-1zM432 181h1v1h-1zM432 185h1v1h-1zM441 182h1v3h-1zM440 181h1v1h-1zM440 185h1v1h-1zM449 182h1v3h-1zM448 181h1v1h-1zM448 185h1v1h-1zM457 182h1v3h-1zM456 181h1v1h-1zM456 185h1v1h-1zM465 182h1v3h-1zM464 181h1v1h-1zM464 185h1v1h-1zM473 182h1v3h-1zM472 181h1v1h-1zM472 185h1v1h-1zM481 182h1v3h-1zM480 181h1v1h-1zM480 185h1v1h-1zM489 182h1v3h-1zM488 181h1v1h-1zM488 185h1v1h-1zM497 182h1v3h-1zM496 181h1v1h-1zM496 185h1v1h-1zM505 182h1v3h-1zM504 181h1v1h-1zM504 185h1v1h-1zM513 182h1v3h-1zM512 181h1v1h-1zM512 185h1v1h-1zM521 182h1v3h-1zM520 181h1v1h-1zM520 185h1v1h-1zM529 182h1v3h-1zM528 181h1v1h-1zM528 185h1v1h-1zM537 182h1v3h-1zM536 181h1v1h-1zM536 185h1v1h-1zM545 182h1v3h-1zM544 181h1v1h-1zM544 185h1v1h-1zM553 182h1v3h-1zM552 181h1v1h-1zM552 185h1v1h-1zM561 182h1v3h-1zM560 181h1v1h-1zM560 185h1v1h-1zM569 182h1v3h-1zM568 181h1v1h-1zM568 185h1v1h-1zM577 182h1v3h-1zM576 181h1v1h-1zM576 185h1v1h-1zM585 182h1v3h-1zM584 181h1v1h-1zM584 185h1v1h-1zM593 182h1v3h-1zM592 181h1v1h-1zM592 185h1v1h-1zM601 182h1v3h-1zM600 181h1v1h-1zM600 185h1v1h-1zM609 182h1v3h-1zM608 181h1v1h-1zM608 185h1v1h-1zM617 182h1v3h-1zM616 181h1v1h-1zM616 185h1v1h-1zM625 182h1v3h-1zM624 181h1v1h-1zM624 185h1v1h-1zM633 182h1v3h-1zM632 181h1v1h-1zM632 185h1v1h-1zM641 182h1v3h-1zM640 181h1v1h-1zM640 185h1v1h-1zM649 182h1v3h-1zM648 181h1v1h-1zM648 185h1v1h-1zM657 182h1v3h-1zM656 181h1v1h-1zM656 185h1v1h-1zM665 182h1v3h-1zM664 181h1v1h-1zM664 185h1v1h-1zM673 182h1v3h-1zM672 181h1v1h-1zM672 185h1v1h-1zM681 182h1v3h-1zM680 181h1v1h-1zM680 185h1v1h-1zM689 182h1v3h-1zM688 181h1v1h-1zM688 185h1v1h-1zM697 182h1v3h-1zM696 181h1v1h-1zM696 185h1v1h-1zM705 182h1v3h-1zM704 181h1v1h-1zM704 185h1v1h-1zM713 182h1v3h-1zM712 181h1v1h-1zM712 185h1v1h-1zM721 182h1v3h-1zM720 181h1v1h-1zM720 185h1v1h-1zM729 182h1v3h-1zM728 181h1v1h-1zM728 185h1v1h-1zM737 182h1v3h-1zM736 181h1v1h-1zM736 185h1v1h-1zM745 182h1v3h-1zM744 181h1v1h-1zM744 185h1v1h-1zM753 182h1v3h-1zM752 181h1v1h-1zM752 185h1v1h-1zM761 182h1v3h-1zM760 181h1v1h-1zM760 185h1v1h-1zM769 182h1v3h-1zM768 181h1v1h-1zM768 185h1v1h-1zM777 182h1v3h-1zM776 181h1v1h-1zM776 185h1v1h-1zM785 182h1v3h-1zM784 181h1v1h-1zM784 185h1v1h-1zM793 182h1v3h-1zM792 181h1v1h-1zM792 185h1v1h-1zM801 182h1v3h-1zM800 181h1v1h-1zM800 185h1v1h-1zM809 182h1v3h-1zM808 181h1v1h-1zM808 185h1v1h-1zM817 182h1v3h-1zM816 181h1v1h-1zM816 185h1v1h-1zM825 182h1v3h-1zM824 181h1v1h-1zM824 185h1v1h-1zM833 182h1v3h-1zM832 181h1v1h-1zM832 185h1v1h-1zM841 182h1v3h-1zM840 181h1v1h-1zM840 185h1v1h-1zM849 182h1v3h-1zM848 181h1v1h-1zM848 185h1v1h-1zM857 182h1v3h-1zM856 181h1v1h-1zM856 185h1v1h-1zM865 182h1v3h-1zM864 181h1v1h-1zM864 185h1v1h-1zM873 182h1v3h-1zM872 181h1v1h-1zM872 185h1v1h-1zM881 182h1v3h-1zM880 181h1v1h-1zM880 185h1v1h-1zM889 182h1v3h-1zM888 181h1v1h-1zM888 185h1v1h-1zM897 182h1v3h-1zM896 181h1v1h-1zM896 185h1v1h-1zM905 182h1v3h-1zM904 181h1v1h-1zM904 185h1v1h-1zM913 182h1v3h-1zM912 181h1v1h-1zM912 185h1v1h-1zM921 182h1v3h-1zM920 181h1v1h-1zM920 185h1v1h-1zM929 182h1v3h-1zM928 181h1v1h-1zM928 185h1v1h-1zM937 182h1v3h-1zM936 181h1v1h-1zM936 185h1v1h-1zM945 182h1v3h-1zM944 181h1v1h-1zM944 185h1v1h-1z" fill="#0c0c78"/>
<path d="M159 180h1v1h-1zM159 186h1v1h-1zM167 180h1v1h-1zM167 186h1v1h-1zM175 180h1v1h-1zM175 186h1v1h-1zM183 180h1v1h-1zM183 186h1v1h-1zM191 180h1v1h-1zM191 186h1v1h-1zM199 180h1v1h-1zM199 186h1v1h-1zM207 180h1v1h-1zM207 186h1v1h-1zM215 180h1v1h-1zM215 186h1v1h-1zM223 180h1v1h-1zM223 186h1v1h-1zM231 180h1v1h-1zM231 186h1v1h-1zM239 180h1v1h-1zM239 186h1v1h-1zM247 180h1v1h-1zM247 186h1v1h-1zM255 180h1v1h-1zM255 186h1v1h-1zM263 180h1v1h-1zM263 186h1v1h-1zM271 180h1v1h-1zM271 186h1v1h-1zM279 180h1v1h-1zM279 186h1v1h-1zM287 180h1v1h-1zM287 186h1v1h-1zM295 180h1v1h-1zM295 186h1v1h-1zM303 180h1v1h-1zM303 186h1v1h-1zM311 180h1v1h-1zM311 186h1v1h-1zM319 180h1v1h-1zM319 186h1v1h-1zM327 180h1v1h-1zM327 186h1v1h-1zM335 180h1v1h-1zM335 186h1v1h-1zM343 180h1v1h-1zM343 186h1v1h-1zM351 180h1v1h-1zM351 186h1v1h-1zM359 180h1v1h-1zM359 186h1v1h-1zM367 180h1v1h-1zM367 186h1v1h-1zM375 180h1v1h-1zM375 186h1v1h-1zM383 180h1v1h-1zM383 186h1v1h-1zM391 180h1v1h-1zM391 186h1v1h-1zM399 180h1v1h-1zM399 186h1v1h-1zM407 180h1v1h-1zM407 186h1v1h-1zM415 180h1v1h-1zM415 186h1v1h-1zM423 180h1v1h-1zM423 186h1v1h-1zM431 180h1v1h-1zM431 186h1v1h-1zM439 180h1v1h-1zM439 186h1v1h-1zM447 180h1v1h-1zM447 186h1v1h-1zM455 180h1v1h-1zM455 186h1v1h-1zM463 180h1v1h-1zM463 186h1v1h-1zM471 180h1v1h-1zM471 186h1v1h-1zM479 180h1v1h-1zM479 186h1v1h-1zM487 180h1v1h-1zM487 186h1v1h-1zM495 180h1v1h-1zM495 186h1v1h-1zM503 180h1v1h-1zM503 186h1v1h-1zM511 180h1v1h-1zM511 186h1v1h-1zM519 180h1v1h-1zM519 186h1v1h-1zM527 180h1v1h-1zM527 186h1v1h-1zM535 180h1v1h-1zM535 186h1v1h-1zM543 180h1v1h-1zM543 186h1v1h-1zM551 180h1v1h-1zM551 186h1v1h-1zM559 180h1v1h-1zM559 186h1v1h-1zM567 180h1v1h-1zM567 186h1v1h-1zM575 180h1v1h-1zM575 186h1v1h-1zM583 180h1v1h-1zM583 186h1v1h-1zM591 180h1v1h-1zM591 186h1v1h-1zM599 180h1v1h-1zM599 186h1v1h-1zM607 180h1v1h-1zM607 186h1v1h-1zM615 180h1v1h-1zM615 186h1v1h-1zM623 180h1v1h-1zM623 186h1v1h-1zM631 180h1v1h-1zM631 186h1v1h-1zM639 180h1v1h-1zM639 186h1v1h-1zM647 180h1v1h-1zM647 186h1v1h-1zM655 180h1v1h-1zM655 186h1v1h-1zM663 180h1v1h-1zM663 186h1v1h-1zM671 180h1v1h-1zM671 186h1v1h-1zM679 180h1v1h-1zM679 186h1v1h-1zM687 180h1v1h-1zM687 186h1v1h-1zM695 180h1v1h-1zM695 186h1v1h-1zM703 180h1v1h-1zM703 186h1v1h-1zM711 180h1v1h-1zM711 186h1v1h-1zM719 180h1v1h-1zM719 186h1v1h-1zM727 180h1v1h-1zM727 186h1v1h-1zM735 180h1v1h-1zM735 186h1v1h-1zM743 180h1v1h-1zM743 186h1v1h-1zM751 180h1v1h-1zM751 186h1v1h-1zM759 180h1v1h-1zM759 186h1v1h-1zM767 180h1v1h-1zM767 186h1v1h-1zM775 180h1v1h-1zM775 186h1v1h-1zM783 180h1v1h-1zM783 186h1v1h-1zM791 180h1v1h-1zM791 186h1v1h-1zM799 180h1v1h-1zM799 186h1v1h-1zM807 180h1v1h-1zM807 186h1v1h-1zM815 180h1v1h-1zM815 186h1v1h-1zM823 180h1v1h-1zM823 186h1v1h-1zM831 180h1v1h-1zM831 186h1v1h-1zM839 180h1v1h-1zM839 186h1v1h-1zM847 180h1v1h-1zM847 186h1v1h-1zM855 180h1v1h-1zM855 186h1v1h-1zM863 180h1v1h-1zM863 186h1v1h-1zM871 180h1v1h-1zM871 186h1v1h-1zM879 180h1v1h-1zM879 186h1v1h-1zM887 180h1v1h-1zM887 186h1v1h-1zM895 180h1v1h-1zM895 186h1v1h-1zM903 180h1v1h-1zM903 186h1v1h-1zM911 180h1v1h-1zM911 186h1v1h-1zM919 180h1v1h-1zM919 186h1v1h-1zM927 180h1v1h-1zM927 186h1v1h-1zM935 180h1v1h-1zM935 186h1v1h-1zM943 180h1v1h-1zM943 186h1v1h-1z" fill="#0c0c78" fill-opacity="0.45"/>
<rect x="157" y="214" width="792" height="1" fill="#0c0c78"/>
<rect x="156" y="285" width="793" height="15" fill="#bebebe"/><path d="M156 285h793v1h-793zM948 285h1v15h-1z" fill="#b6b6b6"/>
<rect x="156" y="348" width="378" height="50" fill="#fff"/>
<path d="M156 348h378v1h-378zM533 348h1v50h-1zM156 349h1v48h-1z" fill="#efefef"/>
<rect x="156" y="353" width="5" height="44" fill="#FFA54F"/>
<rect x="163" y="355" width="5" height="42" fill="#EE9A00"/>
<rect x="170" y="360" width="5" height="37" fill="#8FBC8F"/>
<rect x="177" y="361" width="5" height="36" fill="#8B1C62"/>
<rect x="184" y="365" width="5" height="32" fill="#EE6A50"/>
<rect x="191" y="359" width="5" height="38" fill="#FF0000"/>
<rect x="198" y="358" width="5" height="39" fill="#CDB79E"/>
<rect x="205" y="378" width="5" height="19" fill="#EEEE00"/>
<rect x="212" y="372" width="5" height="25" fill="#EEEE00"/>
<rect x="219" y="378" width="5" height="19" fill="#EEEE00"/>
<rect x="226" y="352" width="5" height="45" fill="#EEEE00"/>
<rect x="233" y="352" width="5" height="45" fill="#EEEE00"/>
<rect x="240" y="369" width="5" height="28" fill="#EEEE00"/>
<rect x="247" y="369" width="5" height="28" fill="#EEEE00"/>
<rect x="254" y="379" width="5" height="18" fill="#EEEE00"/>
<rect x="261" y="372" width="5" height="25" fill="#EEEE00"/>
<rect x="268" y="378" width="5" height="19" fill="#EEEE00"/>
<rect x="275" y="381" width="5" height="16" fill="#EEEE00"/>
<rect x="282" y="374" width="5" height="23" fill="#EEEE00"/>
<rect x="289" y="378" width="5" height="19" fill="#EEEE00"/>
<rect x="296" y="353" width="5" height="44" fill="#00CDCD"/>
<rect x="303" y="358" width="5" height="39" fill="#EE82EE"/>
<rect x="310" y="358" width="5" height="39" fill="#9AC0CD"/>
<rect x="317" y="354" width="5" height="43" fill="#EED5D2"/>
<rect x="324" y="352" width="5" height="45" fill="#EED5D2"/>
<rect x="331" y="355" width="5" height="42" fill="#CDB79E"/>
<rect x="338" y="358" width="5" height="39" fill="#EEC591"/>
<rect x="345" y="361" width="5" height="36" fill="#8B7355"/>
<rect x="352" y="362" width="5" height="35" fill="#8B7355"/>
<rect x="359" y="360" width="5" height="37" fill="#CDAA7D"/>
<rect x="366" y="353" width="5" height="44" fill="#EED5D2"/>
<rect x="373" y="362" width="5" height="35" fill="#B452CD"/>
<rect x="380" y="374" width="5" height="23" fill="#7A378B"/>
<rect x="387" y="366" width="5" height="31" fill="#CDB79E"/>
<rect x="394" y="362" width="5" height="35" fill="#CDB79E"/>
<rect x="401" y="369" width="5" height="28" fill="#CDB79E"/>
<rect x="408" y="354" width="5" height="43" fill="#9ACD32"/>
<rect x="415" y="359" width="5" height="38" fill="#CDB79E"/>
<rect x="422" y="360" width="5" height="37" fill="#7A67EE"/>
<rect x="429" y="359" width="5" height="38" fill="#FFD700"/>
<rect x="436" y="349" width="5" height="48" fill="#FFB6C1"/>
<rect x="443" y="365" width="5" height="32" fill="#CD9B1D"/>
<rect x="450" y="348" width="5" height="49" fill="#B4EEB4"/>
<rect x="457" y="359" width="5" height="38" fill="#D9D9D9"/>
<rect x="464" y="355" width="5" height="42" fill="#3A5FCD"/>
<rect x="471" y="355" width="5" height="42" fill="#1E90FF"/>
<rect x="478" y="359" width="5" height="38" fill="#CDB79E"/>
<rect x="485" y="360" width="5" height="37" fill="#CDB79E"/>
<rect x="492" y="358" width="5" height="39" fill="#FFD39B"/>
<rect x="499" y="355" width="5" height="42" fill="#A6A6A6"/>
<rect x="506" y="351" width="5" height="46" fill="#008B45"/>
<rect x="513" y="357" width="5" height="40" fill="#EED5D2"/>
<rect x="520" y="356" width="5" height="41" fill="#EED5D2"/>
<rect x="527" y="383" width="5" height="14" fill="#FF00FF"/>
<rect x="156" y="398" width="793" height="2" fill="#000080"/>
<rect x="156" y="446" width="793" height="1" fill="#d2323c"/>
</g>
<linearGradient id="g1" gradientUnits="userSpaceOnUse" x1="200" y1="0" x2="243" y2="0"><stop offset="0" stop-color="#3232e6" stop-opacity="0.15"/><stop offset="0.12" stop-color="#3232e6" stop-opacity="0.9"/><stop offset="0.24" stop-color="#3232e6" stop-opacity="0.3"/><stop offset="0.5" stop-color="#3232e6" stop-opacity="0.2"/><stop offset="0.75" stop-color="#3232e6" stop-opacity="0.55"/><stop offset="0.9" stop-color="#3232e6" stop-opacity="0.85"/><stop offset="1" stop-color="#3232e6" stop-opacity="0.8"/></linearGradient>
<rect x="200" y="489" width="43" height="1" fill="url(#g1)"/>
<linearGradient id="g2" gradientUnits="userSpaceOnUse" x1="465" y1="0" x2="508" y2="0"><stop offset="0" stop-color="#3232e6" stop-opacity="0.15"/><stop offset="0.12" stop-color="#3232e6" stop-opacity="0.9"/><stop offset="0.24" stop-color="#3232e6" stop-opacity="0.3"/><stop offset="0.5" stop-color="#3232e6" stop-opacity="0.2"/><stop offset="0.75" stop-color="#3232e6" stop-opacity="0.55"/><stop offset="0.9" stop-color="#3232e6" stop-opacity="0.85"/><stop offset="1" stop-color="#3232e6" stop-opacity="0.8"/></linearGradient>
<rect x="465" y="489" width="43" height="1" fill="url(#g2)"/>
<linearGradient id="g3" gradientUnits="userSpaceOnUse" x1="597" y1="0" x2="640" y2="0"><stop offset="0" stop-color="#3232e6" stop-opacity="0.15"/><stop offset="0.12" stop-color="#3232e6" stop-opacity="0.9"/><stop offset="0.24" stop-color="#3232e6" stop-opacity="0.3"/><stop offset="0.5" stop-color="#3232e6" stop-opacity="0.2"/><stop offset="0.75" stop-color="#3232e6" stop-opacity="0.55"/><stop offset="0.9" stop-color="#3232e6" stop-opacity="0.85"/><stop offset="1" stop-color="#3232e6" stop-opacity="0.8"/></linearGradient>
<rect x="597" y="487" width="43" height="1" fill="url(#g3)"/>
<linearGradient id="g4" gradientUnits="userSpaceOnUse" x1="860" y1="0" x2="899" y2="0"><stop offset="0" stop-color="#ff3232" stop-opacity="0.1"/><stop offset="0.2" stop-color="#ff3232" stop-opacity="0.5"/><stop offset="0.4" stop-color="#ff3232" stop-opacity="0.6"/><stop offset="0.5" stop-color="#ff3232" stop-opacity="0.35"/><stop offset="0.7" stop-color="#ff3232" stop-opacity="0.7"/><stop offset="0.9" stop-color="#ff3232" stop-opacity="0.4"/><stop offset="1" stop-color="#ff3232" stop-opacity="0.1"/></linearGradient>
<rect x="860" y="489" width="39" height="1" fill="url(#g4)"/>
<linearGradient id="g5" gradientUnits="userSpaceOnUse" x1="862" y1="0" x2="904" y2="0"><stop offset="0" stop-color="#3232e6" stop-opacity="0.15"/><stop offset="0.12" stop-color="#3232e6" stop-opacity="0.9"/><stop offset="0.24" stop-color="#3232e6" stop-opacity="0.3"/><stop offset="0.5" stop-color="#3232e6" stop-opacity="0.2"/><stop offset="0.75" stop-color="#3232e6" stop-opacity="0.55"/><stop offset="0.9" stop-color="#3232e6" stop-opacity="0.85"/><stop offset="1" stop-color="#3232e6" stop-opacity="0.8"/></linearGradient>
<rect x="862" y="490" width="42" height="1" fill="url(#g5)"/>
<rect x="727" y="496" width="37" height="1" fill="#50e650" fill-opacity="0.8"/>
<path d="M768 490.6C760 489.2 746 488.9 737 489.6C732 490.1 729.5 491.2 729.5 492.3C729.5 493.6 733 494.8 740 495.2C750 495.7 762 494.7 770 493.3" stroke="#a09600" stroke-width="1.25" fill="none"/>
<path d="M729 492.3C729 490.9 733 489.9 737.5 489.6C734.5 491 734.5 493.6 737.5 495.1C732 494.9 729 493.8 729 492.3Z" fill="#a09600"/>
<path d="M762 494.6C765 494 768 493.4 770.5 493C768 494.2 765 494.9 762 495.2Z" fill="#a09600" fill-opacity="0.6"/>
<rect x="743" y="496" width="6" height="5" fill="#00ff00"/>
<rect x="552" y="603" width="1" height="14" fill="#e3890a"/>
<g shape-rendering="crispEdges"><path d="M216 581h7v1h-7zM216 584h7v1h-7z" fill="#7272aa"/><path d="M216 626h7v1h-7zM216 629h7v1h-7z" fill="#7272aa"/><path d="M216 641h7v1h-7zM216 644h7v1h-7z" fill="#7272aa"/><path d="M348 581h7v1h-7zM348 584h7v1h-7z" fill="#7272aa"/><path d="M348 626h7v1h-7zM348 629h7v1h-7z" fill="#7272aa"/><path d="M348 641h7v1h-7zM348 644h7v1h-7z" fill="#7272aa"/><path d="M483 567h3v1h-3z" fill="#7272aa"/><path d="M480 581h7v1h-7zM480 584h7v1h-7z" fill="#7272aa"/><path d="M480 596h7v1h-7zM480 599h7v1h-7z" fill="#7272aa"/><path d="M483 612h3v1h-3z" fill="#7272aa"/><path d="M480 626h7v1h-7zM480 629h7v1h-7z" fill="#7272aa"/><path d="M480 641h7v1h-7zM480 644h7v1h-7z" fill="#7272aa"/><path d="M615 567h3v1h-3z" fill="#7272aa"/><path d="M612 581h7v1h-7zM612 584h7v1h-7z" fill="#7272aa"/><path d="M612 626h7v1h-7zM612 629h7v1h-7z" fill="#7272aa"/><path d="M612 641h7v1h-7zM612 644h7v1h-7z" fill="#7272aa"/><path d="M747 567h3v1h-3z" fill="#7272aa"/><path d="M744 581h7v1h-7zM744 584h7v1h-7z" fill="#7272aa"/><path d="M744 626h7v1h-7zM744 629h7v1h-7z" fill="#7272aa"/><path d="M744 641h7v1h-7zM744 644h7v1h-7z" fill="#7272aa"/><path d="M879 567h3v1h-3z" fill="#7272aa"/><path d="M876 581h7v1h-7zM876 584h7v1h-7z" fill="#7272aa"/><path d="M879 597h3v1h-3z" fill="#7272aa"/><path d="M876 611h7v1h-7zM876 614h7v1h-7z" fill="#7272aa"/><path d="M876 626h7v1h-7zM876 629h7v1h-7z" fill="#7272aa"/><path d="M876 641h7v1h-7zM876 644h7v1h-7z" fill="#7272aa"/><path d="M145 461h8v1h-8z" fill="#3c3c8c"/><path d="M145 511h8v1h-8z" fill="#8c3c3c"/></g>
<text x="57.00" y="13" font-size="14" fill="#000" textLength="96.10" lengthAdjust="spacingAndGlyphs"><tspan font-size="14">W</tspan><tspan font-size="13.6">indow </tspan><tspan font-size="14">P</tspan><tspan font-size="13.6">osition</tspan></text>
<text x="120.06" y="30" font-size="14" fill="#000" textLength="32.20" lengthAdjust="spacingAndGlyphs"><tspan font-size="14">S</tspan><tspan font-size="13.6">cale</tspan></text>
<text x="117.06" y="47" font-size="14" fill="#000" textLength="35.68" lengthAdjust="spacingAndGlyphs"><tspan font-size="13.6">chr16:</tspan></text>
<text x="131.55" y="64" font-size="14" fill="#000" textLength="20.45" lengthAdjust="spacingAndGlyphs"><tspan font-size="13.6">---&gt;</tspan></text>
<text x="346.07" y="12" font-size="14" fill="#000" textLength="195.91" lengthAdjust="spacingAndGlyphs"><tspan font-size="14">H</tspan><tspan font-size="13.6">uman </tspan><tspan font-size="14">F</tspan><tspan font-size="13.6">eb. 2009 (</tspan><tspan font-size="14">GRC</tspan><tspan font-size="13.6">h37/hg19)</tspan></text>
<text x="553.05" y="12" font-size="14" fill="#000" textLength="206.59" lengthAdjust="spacingAndGlyphs"><tspan font-size="13.6">chr16:85,660,770-85,660,775 (6 bp)</tspan></text>
<text x="371.04" y="29" font-size="14" fill="#000" textLength="45.55" lengthAdjust="spacingAndGlyphs"><tspan font-size="13.6">2 bases</tspan></text>
<text x="694.07" y="29" font-size="14" fill="#000" textLength="28.16" lengthAdjust="spacingAndGlyphs"><tspan font-size="13.6">hg19</tspan></text>
<text x="221.65" y="47" font-size="14" fill="#000" textLength="64.85" lengthAdjust="spacingAndGlyphs"><tspan font-size="13.6">85,660,770</tspan></text>
<text x="353.65" y="47" font-size="14" fill="#000" textLength="64.85" lengthAdjust="spacingAndGlyphs"><tspan font-size="13.6">85,660,771</tspan></text>
<text x="485.65" y="47" font-size="14" fill="#000" textLength="64.85" lengthAdjust="spacingAndGlyphs"><tspan font-size="13.6">85,660,772</tspan></text>
<text x="617.65" y="47" font-size="14" fill="#000" textLength="64.85" lengthAdjust="spacingAndGlyphs"><tspan font-size="13.6">85,660,773</tspan></text>
<text x="749.66" y="47" font-size="14" fill="#000" textLength="63.88" lengthAdjust="spacingAndGlyphs"><tspan font-size="13.6">85,660,774</tspan></text>
<text x="215.11" y="61" font-size="14" fill="#000" textLength="9.68" lengthAdjust="spacingAndGlyphs"><tspan font-size="14">G</tspan></text>
<text x="347.11" y="61" font-size="14" fill="#000" textLength="9.68" lengthAdjust="spacingAndGlyphs"><tspan font-size="14">G</tspan></text>
<text x="479.11" y="61" font-size="14" fill="#000" textLength="9.68" lengthAdjust="spacingAndGlyphs"><tspan font-size="14">G</tspan></text>
<text x="611.11" y="61" font-size="14" fill="#000" textLength="9.68" lengthAdjust="spacingAndGlyphs"><tspan font-size="14">G</tspan></text>
<text x="743.62" y="61" font-size="14" fill="#000" textLength="8.86" lengthAdjust="spacingAndGlyphs"><tspan font-size="14">C</tspan></text>
<text x="875.11" y="61" font-size="14" fill="#000" textLength="9.68" lengthAdjust="spacingAndGlyphs"><tspan font-size="14">G</tspan></text>
<text x="431.54" y="78" font-size="14" fill="#000" textLength="240.68" lengthAdjust="spacingAndGlyphs"><tspan font-size="14">GENCODE</tspan><tspan font-size="13.6"> </tspan><tspan font-size="14">V</tspan><tspan font-size="13.6">49lift37 (3 items filtered out)</tspan></text>
<text x="117.06" y="92" font-size="14" fill="#0c0c78" textLength="35.02" lengthAdjust="spacingAndGlyphs"><tspan font-size="14">GSE</tspan><tspan font-size="13.6">1</tspan></text>
<text x="117.06" y="108" font-size="14" fill="#1a73b8" textLength="35.02" lengthAdjust="spacingAndGlyphs"><tspan font-size="14">GSE</tspan><tspan font-size="13.6">1</tspan></text>
<text x="117.06" y="124" font-size="14" fill="#0c0c78" textLength="35.02" lengthAdjust="spacingAndGlyphs"><tspan font-size="14">GSE</tspan><tspan font-size="13.6">1</tspan></text>
<text x="117.06" y="140" font-size="14" fill="#0c0c78" textLength="35.02" lengthAdjust="spacingAndGlyphs"><tspan font-size="14">GSE</tspan><tspan font-size="13.6">1</tspan></text>
<text x="117.06" y="156" font-size="14" fill="#0c0c78" textLength="35.02" lengthAdjust="spacingAndGlyphs"><tspan font-size="14">GSE</tspan><tspan font-size="13.6">1</tspan></text>
<text x="117.06" y="172" font-size="14" fill="#0c0c78" textLength="35.02" lengthAdjust="spacingAndGlyphs"><tspan font-size="14">GSE</tspan><tspan font-size="13.6">1</tspan></text>
<text x="117.06" y="188" font-size="14" fill="#0c0c78" textLength="35.02" lengthAdjust="spacingAndGlyphs"><tspan font-size="14">GSE</tspan><tspan font-size="13.6">1</tspan></text>
<text x="490.80" y="204" font-size="11" fill="#000" textLength="123.72" lengthAdjust="spacingAndGlyphs">RefSeq genes from NCBI</text>
<text x="59.75" y="219" font-size="14" fill="#0c0c78" textLength="93.47" lengthAdjust="spacingAndGlyphs"><tspan font-size="14">R</tspan><tspan font-size="13.6">ef</tspan><tspan font-size="14">S</tspan><tspan font-size="13.6">eq </tspan><tspan font-size="14">C</tspan><tspan font-size="13.6">urated</tspan></text>
<text x="444.81" y="235" font-size="11" fill="#000" textLength="214.85" lengthAdjust="spacingAndGlyphs">Publications: Sequences in Scientific Articles</text>
<text x="87.06" y="250" font-size="14" fill="#000" textLength="64.23" lengthAdjust="spacingAndGlyphs"><tspan font-size="14">S</tspan><tspan font-size="13.6">equences</tspan></text>
<text x="118.06" y="266" font-size="14" fill="#000" textLength="33.50" lengthAdjust="spacingAndGlyphs"><tspan font-size="14">SNP</tspan><tspan font-size="13.6">s</tspan></text>
<text x="367.45" y="283" font-size="14" fill="#006400" textLength="369.73" lengthAdjust="spacingAndGlyphs"><tspan font-size="14">OMIM</tspan><tspan font-size="13.6"> </tspan><tspan font-size="14">G</tspan><tspan font-size="13.6">ene </tspan><tspan font-size="14">P</tspan><tspan font-size="13.6">henotypes - </tspan><tspan font-size="14">D</tspan><tspan font-size="13.6">ark </tspan><tspan font-size="14">G</tspan><tspan font-size="13.6">reen </tspan><tspan font-size="14">C</tspan><tspan font-size="13.6">an </tspan><tspan font-size="14">B</tspan><tspan font-size="13.6">e </tspan><tspan font-size="14">D</tspan><tspan font-size="13.6">isease-causing</tspan></text>
<text x="74.06" y="297" font-size="14" fill="#006400" textLength="77.19" lengthAdjust="spacingAndGlyphs"><tspan font-size="14">OMIM</tspan><tspan font-size="13.6"> </tspan><tspan font-size="14">G</tspan><tspan font-size="13.6">enes</tspan></text>
<text x="435.30" y="313" font-size="11" fill="#000" textLength="232.37" lengthAdjust="spacingAndGlyphs">Short Genetic Variants from dbSNP release 155</text>
<text x="25.05" y="328" font-size="14" fill="#000" textLength="127.79" lengthAdjust="spacingAndGlyphs"><tspan font-size="14">C</tspan><tspan font-size="13.6">ommon db</tspan><tspan font-size="14">SNP</tspan><tspan font-size="13.6">(155)</tspan></text>
<text x="265.34" y="345" font-size="14" fill="#000" textLength="572.93" lengthAdjust="spacingAndGlyphs"><tspan font-size="14">G</tspan><tspan font-size="13.6">ene </tspan><tspan font-size="14">E</tspan><tspan font-size="13.6">xpression in 54 tissues from </tspan><tspan font-size="14">GTE</tspan><tspan font-size="13.6">x </tspan><tspan font-size="14">RNA</tspan><tspan font-size="13.6">-seq of 17382 samples, 948 donors (</tspan><tspan font-size="14">V</tspan><tspan font-size="13.6">8, </tspan><tspan font-size="14">A</tspan><tspan font-size="13.6">ug 2019)</tspan></text>
<text x="117.06" y="380" font-size="14" fill="#000" textLength="35.02" lengthAdjust="spacingAndGlyphs"><tspan font-size="14">GSE</tspan><tspan font-size="13.6">1</tspan></text>
<text x="280.65" y="415" font-size="14" fill="#000" textLength="541.84" lengthAdjust="spacingAndGlyphs"><tspan font-size="14">H</tspan><tspan font-size="13.6">3</tspan><tspan font-size="14">K</tspan><tspan font-size="13.6">27</tspan><tspan font-size="14">A</tspan><tspan font-size="13.6">c </tspan><tspan font-size="14">M</tspan><tspan font-size="13.6">ark (</tspan><tspan font-size="14">O</tspan><tspan font-size="13.6">ften </tspan><tspan font-size="14">F</tspan><tspan font-size="13.6">ound </tspan><tspan font-size="14">N</tspan><tspan font-size="13.6">ear </tspan><tspan font-size="14">A</tspan><tspan font-size="13.6">ctive </tspan><tspan font-size="14">R</tspan><tspan font-size="13.6">egulatory </tspan><tspan font-size="14">E</tspan><tspan font-size="13.6">lements) on 7 cell lines from </tspan><tspan font-size="14">ENCODE</tspan></text>
<text x="12.56" y="429" font-size="14" fill="#000" textLength="104.85" lengthAdjust="spacingAndGlyphs"><tspan font-size="14">L</tspan><tspan font-size="13.6">ayered </tspan><tspan font-size="14">H</tspan><tspan font-size="13.6">3</tspan><tspan font-size="14">K</tspan><tspan font-size="13.6">27</tspan><tspan font-size="14">A</tspan><tspan font-size="13.6">c</tspan></text>
<text x="116.10" y="460" font-size="14" fill="#3c3c8c" textLength="25.04" lengthAdjust="spacingAndGlyphs"><tspan font-size="13.6">4.88</tspan></text>
<text x="12.97" y="485" font-size="14" fill="#3c3c8c" textLength="85.20" lengthAdjust="spacingAndGlyphs"><tspan font-size="13.6">100 </tspan><tspan font-size="14">V</tspan><tspan font-size="13.6">ert. </tspan><tspan font-size="14">C</tspan><tspan font-size="13.6">ons</tspan></text>
<text x="118.41" y="510" font-size="14" fill="#8c3c3c" textLength="23.12" lengthAdjust="spacingAndGlyphs"><tspan font-size="13.6">-4.5</tspan></text>
<text x="404.84" y="461" font-size="14" fill="#3c3c8c" textLength="294.34" lengthAdjust="spacingAndGlyphs"><tspan font-size="13.6">100 vertebrates </tspan><tspan font-size="14">B</tspan><tspan font-size="13.6">asewise </tspan><tspan font-size="14">C</tspan><tspan font-size="13.6">onservation by </tspan><tspan font-size="14">P</tspan><tspan font-size="13.6">hylo</tspan><tspan font-size="14">P</tspan></text>
<text x="444.74" y="527" font-size="14" fill="#0c0c78" textLength="215.19" lengthAdjust="spacingAndGlyphs"><tspan font-size="14">M</tspan><tspan font-size="13.6">ultiz </tspan><tspan font-size="14">A</tspan><tspan font-size="13.6">lignments of 100 </tspan><tspan font-size="14">V</tspan><tspan font-size="13.6">ertebrates</tspan></text>
<text x="122.06" y="541" font-size="14" fill="#e3890a" textLength="30.70" lengthAdjust="spacingAndGlyphs"><tspan font-size="14">G</tspan><tspan font-size="13.6">aps</tspan></text>
<text x="543.50" y="541" font-size="14" fill="#e3890a" textLength="15.12" lengthAdjust="spacingAndGlyphs"><tspan font-size="13.6">28</tspan></text>
<text x="111.05" y="556" font-size="14" fill="#0c0c78" textLength="42.04" lengthAdjust="spacingAndGlyphs"><tspan font-size="14">H</tspan><tspan font-size="13.6">uman</tspan></text>
<text x="109.07" y="571" font-size="14" fill="#0c0c78" textLength="43.31" lengthAdjust="spacingAndGlyphs"><tspan font-size="14">R</tspan><tspan font-size="13.6">hesus</tspan></text>
<text x="114.05" y="586" font-size="14" fill="#006400" textLength="39.05" lengthAdjust="spacingAndGlyphs"><tspan font-size="14">M</tspan><tspan font-size="13.6">ouse</tspan></text>
<text x="129.04" y="601" font-size="14" fill="#0c0c78" textLength="24.15" lengthAdjust="spacingAndGlyphs"><tspan font-size="14">D</tspan><tspan font-size="13.6">og</tspan></text>
<text x="101.06" y="616" font-size="14" fill="#006400" textLength="50.90" lengthAdjust="spacingAndGlyphs"><tspan font-size="14">E</tspan><tspan font-size="13.6">lephant</tspan></text>
<text x="106.04" y="631" font-size="14" fill="#006400" textLength="47.32" lengthAdjust="spacingAndGlyphs"><tspan font-size="14">C</tspan><tspan font-size="13.6">hicken</tspan></text>
<text x="85.04" y="646" font-size="14" fill="#0c0c78" textLength="67.48" lengthAdjust="spacingAndGlyphs"><tspan font-size="14">X</tspan><tspan font-size="13.6">_tropicalis</tspan></text>
<text x="99.00" y="661" font-size="14" fill="#006400" textLength="53.89" lengthAdjust="spacingAndGlyphs"><tspan font-size="14">Z</tspan><tspan font-size="13.6">ebrafish</tspan></text>
<text x="215.11" y="556" font-size="14" fill="#0c0c78" textLength="9.68" lengthAdjust="spacingAndGlyphs"><tspan font-size="14">G</tspan></text>
<text x="215.11" y="571" font-size="14" fill="#0c0c78" textLength="9.68" lengthAdjust="spacingAndGlyphs"><tspan font-size="14">G</tspan></text>
<text x="215.11" y="601" font-size="14" fill="#0c0c78" textLength="9.68" lengthAdjust="spacingAndGlyphs"><tspan font-size="14">G</tspan></text>
<text x="215.62" y="616" font-size="14" fill="#8282b4" textLength="8.86" lengthAdjust="spacingAndGlyphs"><tspan font-size="14">C</tspan></text>
<text x="347.11" y="556" font-size="14" fill="#0c0c78" textLength="9.68" lengthAdjust="spacingAndGlyphs"><tspan font-size="14">G</tspan></text>
<text x="347.11" y="571" font-size="14" fill="#0c0c78" textLength="9.68" lengthAdjust="spacingAndGlyphs"><tspan font-size="14">G</tspan></text>
<text x="347.11" y="601" font-size="14" fill="#0c0c78" textLength="9.68" lengthAdjust="spacingAndGlyphs"><tspan font-size="14">G</tspan></text>
<text x="348.00" y="616" font-size="14" fill="#8282b4" textLength="8.31" lengthAdjust="spacingAndGlyphs"><tspan font-size="14">A</tspan></text>
<text x="479.11" y="556" font-size="14" fill="#0c0c78" textLength="9.68" lengthAdjust="spacingAndGlyphs"><tspan font-size="14">G</tspan></text>
<text x="611.11" y="556" font-size="14" fill="#0c0c78" textLength="9.68" lengthAdjust="spacingAndGlyphs"><tspan font-size="14">G</tspan></text>
<text x="611.11" y="601" font-size="14" fill="#0c0c78" textLength="9.68" lengthAdjust="spacingAndGlyphs"><tspan font-size="14">G</tspan></text>
<text x="611.11" y="616" font-size="14" fill="#0c0c78" textLength="9.68" lengthAdjust="spacingAndGlyphs"><tspan font-size="14">G</tspan></text>
<text x="743.62" y="556" font-size="14" fill="#0c0c78" textLength="8.86" lengthAdjust="spacingAndGlyphs"><tspan font-size="14">C</tspan></text>
<text x="744.00" y="601" font-size="14" fill="#8282b4" textLength="8.31" lengthAdjust="spacingAndGlyphs"><tspan font-size="14">A</tspan></text>
<text x="744.00" y="616" font-size="14" fill="#8282b4" textLength="8.56" lengthAdjust="spacingAndGlyphs"><tspan font-size="14">T</tspan></text>
<text x="875.11" y="556" font-size="14" fill="#0c0c78" textLength="9.68" lengthAdjust="spacingAndGlyphs"><tspan font-size="14">G</tspan></text>
<text x="440.85" y="677" font-size="14" fill="#000" textLength="222.85" lengthAdjust="spacingAndGlyphs"><tspan font-size="14">R</tspan><tspan font-size="13.6">epeating </tspan><tspan font-size="14">E</tspan><tspan font-size="13.6">lements by </tspan><tspan font-size="14">R</tspan><tspan font-size="13.6">epeat</tspan><tspan font-size="14">M</tspan><tspan font-size="13.6">asker</tspan></text>
<text x="67.96" y="691" font-size="14" fill="#000" textLength="83.71" lengthAdjust="spacingAndGlyphs"><tspan font-size="14">R</tspan><tspan font-size="13.6">epeat</tspan><tspan font-size="14">M</tspan><tspan font-size="13.6">asker</tspan></text>
</svg></body></html>
